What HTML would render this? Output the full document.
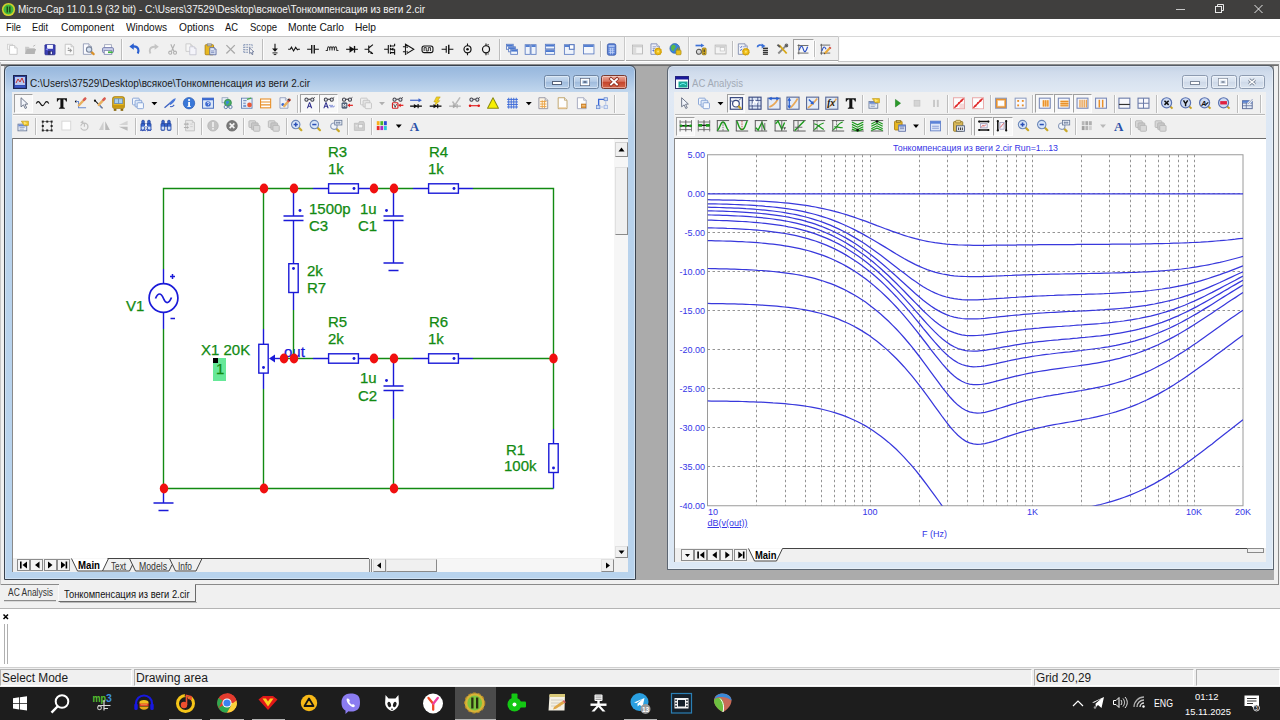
<!DOCTYPE html>
<html><head><meta charset="utf-8"><title>Micro-Cap</title><style>
html,body{margin:0;padding:0}
body{width:1280px;height:720px;overflow:hidden;position:relative;background:#f0f0f0;font-family:"Liberation Sans",sans-serif;font-size:12px;color:#000}
.a{position:absolute}
.t{position:absolute;white-space:nowrap;line-height:1}
svg{position:absolute;overflow:visible}
</style></head><body>
<div class="a " style="left:0px;top:0px;width:1280px;height:19px;background:#403f3e"></div>
<svg style="left:2px;top:2px" width="15" height="15" viewBox="0 0 15 15"><circle cx="6.500" cy="7.500" r="6.600" fill="#d2d22c"/><circle cx="6.500" cy="7.500" r="5" fill="#3eb63e"/><rect x="4.600" y="4.500" width="1.300" height="6" fill="#1c3a12"/><rect x="7.200" y="4.500" width="1.300" height="6" fill="#1c3a12"/></svg>
<div class="t" style="left:18px;top:4px;font-size:10.5px;color:#f4f4f4;transform:scaleX(0.9516);transform-origin:0 0;">Micro-Cap 11.0.1.9 (32 bit) - C:\Users\37529\Desktop\всякое\Тонкомпенсация из веги 2.cir</div>
<svg style="left:1170px;top:0" width="110" height="19" viewBox="0 0 110 19"><g stroke="#e8e8e8" stroke-width="1" fill="none"><path d="M6 9.5h9" stroke="#c8c8c8"/><rect x="45.5" y="6.5" width="6" height="6"/><path d="M47.5 6.5v-2h6v6h-2"/><path d="M84.5 5l8 8M92.500 5l-8 8"/></g></svg>
<div class="a " style="left:0px;top:19px;width:1280px;height:17px;background:#fff"></div>
<div class="t" style="left:6px;top:23px;font-size:10.3px;color:#111;transform:scaleX(0.9041);transform-origin:0 0;">File</div>
<div class="t" style="left:32px;top:23px;font-size:10.3px;color:#111;transform:scaleX(0.9018);transform-origin:0 0;">Edit</div>
<div class="t" style="left:61px;top:23px;font-size:10.3px;color:#111;transform:scaleX(0.9956);transform-origin:0 0;">Component</div>
<div class="t" style="left:126px;top:23px;font-size:10.3px;color:#111;transform:scaleX(0.9816);transform-origin:0 0;">Windows</div>
<div class="t" style="left:179px;top:23px;font-size:10.3px;color:#111;transform:scaleX(0.9863);transform-origin:0 0;">Options</div>
<div class="t" style="left:225px;top:23px;font-size:10.3px;color:#111;transform:scaleX(0.9088);transform-origin:0 0;">AC</div>
<div class="t" style="left:250px;top:23px;font-size:10.3px;color:#111;transform:scaleX(0.9248);transform-origin:0 0;">Scope</div>
<div class="t" style="left:288px;top:23px;font-size:10.3px;color:#111;transform:scaleX(0.9985);transform-origin:0 0;">Monte Carlo</div>
<div class="t" style="left:355px;top:23px;font-size:10.3px;color:#111;transform:scaleX(0.9917);transform-origin:0 0;">Help</div>
<div class="a " style="left:0px;top:36px;width:1280px;height:26px;background:#fff"></div>
<div class="a " style="left:0px;top:36px;width:838px;height:25px;background:#f0f0f0;border-top:1px solid #c4c4c4;border-bottom:1px solid #a8a8a8;box-sizing:border-box"></div>
<div class="a " style="left:838px;top:36px;width:442px;height:1px;background:#d8d8d8"></div>
<div class="a " style="left:838px;top:61px;width:442px;height:1px;background:#c8c8c8"></div>
<div class="a " style="left:624px;top:37px;width:1px;height:24px;background:#c9c9c9"></div>
<div class="a " style="left:625px;top:37px;width:1px;height:24px;background:#fbfbfb"></div>
<div class="a " style="left:688px;top:37px;width:1px;height:24px;background:#c9c9c9"></div>
<div class="a " style="left:689px;top:37px;width:1px;height:24px;background:#fbfbfb"></div>
<div class="a " style="left:838px;top:37px;width:1px;height:24px;background:#c9c9c9"></div>
<div class="a " style="left:839px;top:37px;width:1px;height:24px;background:#fbfbfb"></div>
<div class="a " style="left:0px;top:62px;width:1280px;height:523px;background:#f0f0f0"></div>
<div class="a " style="left:0px;top:64px;width:1279px;height:1px;background:#8c8c8c"></div>
<div class="a " style="left:0px;top:65px;width:1279px;height:1px;background:#6e6e6e"></div>
<div class="a " style="left:0px;top:584px;width:1279px;height:1px;background:#8a8a8a"></div>
<div class="a " style="left:1278px;top:65px;width:1px;height:520px;background:#8a8a8a"></div>
<div class="a " style="left:0px;top:62px;width:1px;height:523px;background:#c8c8c8"></div>
<div class="a " style="left:4px;top:66px;width:1270px;height:514px;background:#ababab"></div>
<div class="a " style="left:4px;top:65px;width:632px;height:515px;background:linear-gradient(#96b7dc 0px,#a3c0e2 9px,#b8d0ea 21px,#c4d9ef 28px,#b8d2ec 61px,#b8d3ed 100%);border:1px solid #38424e;border-radius:6px 6px 1px 1px;box-sizing:border-box;box-shadow:inset 0 0 0 1px rgba(255,255,255,.35)"></div>
<svg style="left:13px;top:75px" width="14" height="14" viewBox="0 0 14 14"><rect x="0.5" y="0.5" width="13" height="13" fill="#2a3f9a" stroke="#1c2450"/><rect x="2" y="2" width="10" height="8" fill="#b8c8f0"/><path d="M3 8l2-4 2 3 2-4 2 5" stroke="#c03030" fill="none"/><rect x="2" y="10.5" width="10" height="2" fill="#3858c8"/></svg>
<div class="t" style="left:30px;top:77.8px;font-size:10.5px;color:#1a1a1a;transform:scaleX(0.9516);transform-origin:0 0;">C:\Users\37529\Desktop\всякое\Тонкомпенсация из веги 2.cir</div>
<div class="a " style="left:544.0px;top:75px;width:26px;height:14px;background:linear-gradient(#c9dcf0 0%,#b4cbe6 45%,#9fbbdc 50%,#b8d0ea 100%);border:1px solid #6f86a3;border-radius:2.5px;box-sizing:border-box;box-shadow:inset 0 0 0 1px rgba(255,255,255,.4)"></div><div class="a " style="left:572.5px;top:75px;width:26px;height:14px;background:linear-gradient(#c9dcf0 0%,#b4cbe6 45%,#9fbbdc 50%,#b8d0ea 100%);border:1px solid #6f86a3;border-radius:2.5px;box-sizing:border-box;box-shadow:inset 0 0 0 1px rgba(255,255,255,.4)"></div><div class="a " style="left:601.0px;top:75px;width:26px;height:14px;background:linear-gradient(#e9a99a 0%,#d8705c 45%,#c4432b 50%,#d4654a 100%);border:1px solid #7a3a30;border-radius:2.5px;box-sizing:border-box;box-shadow:inset 0 0 0 1px rgba(255,255,255,.4)"></div><svg style="left:544px;top:75px" width="84" height="14" viewBox="0 0 84 14"><rect x="8.5" y="6.5" width="9" height="3" fill="#fff" stroke="#54617a" stroke-width="1"/><rect x="36.5" y="3.5" width="9" height="7" fill="none" stroke="#54617a" stroke-width="1"/><rect x="37.5" y="4.5" width="7" height="5" fill="none" stroke="#fff" stroke-width="1.6"/><rect x="39.5" y="6.2" width="3" height="1.6" fill="#54617a"/><path d="M67 4l6 5.500M73 4l-6 5.500" stroke="#8a2a1c" stroke-width="3.400" stroke-linecap="square"/><path d="M67 4l6 5.500M73 4l-6 5.500" stroke="#fff" stroke-width="1.900" stroke-linecap="square"/></svg>
<div class="a " style="left:12px;top:92px;width:616px;height:480px;background:#f0f0f0"></div>
<div class="a " style="left:13px;top:114px;width:612px;height:1px;background:#b9b9b9"></div>
<div class="a " style="left:13px;top:115px;width:612px;height:1px;background:#fafafa"></div>
<div class="a " style="left:12px;top:138px;width:616px;height:1px;background:#6e6e6e"></div>
<div class="a " style="left:12px;top:138px;width:1px;height:434px;background:#8a8a8a"></div>
<div class="a " style="left:13px;top:139px;width:601px;height:419px;background:#fff"></div>
<div class="a " style="left:614px;top:139px;width:14px;height:419px;background:#f6f6f6"></div>
<div class="a " style="left:615px;top:142px;width:13px;height:15px;background:#f0f0f0;border:1px solid #d2d2d2;border-right-color:#8a8a8a;border-bottom-color:#8a8a8a;box-sizing:border-box"></div>
<svg style="left:615px;top:142px" width="13" height="15"><path d="M3.5 9.5l3-4 3 4z" fill="#000"/></svg>
<div class="a " style="left:615px;top:167px;width:13px;height:68px;background:#f0f0f0;border:1px solid #e0e0e0;border-right-color:#8a8a8a;border-bottom-color:#8a8a8a;box-sizing:border-box"></div>
<div class="a " style="left:615px;top:546px;width:13px;height:12px;background:#f0f0f0;border:1px solid #e0e0e0;border-right-color:#8a8a8a;border-bottom-color:#8a8a8a;box-sizing:border-box"></div>
<svg style="left:615px;top:546px" width="13" height="12"><path d="M3.5 4.500l3 3.500 3-3.500z" fill="#000"/></svg>
<div class="a " style="left:13px;top:558px;width:601px;height:14px;background:#f0f0f0"></div>
<div class="a " style="left:614px;top:558px;width:14px;height:14px;background:#f0f0f0"></div>
<div class="a " style="left:17.0px;top:559px;width:13px;height:12px;background:#f4f4f4;border:1px solid #8c8c8c;box-sizing:border-box"></div><div class="a " style="left:30.4px;top:559px;width:13px;height:12px;background:#f4f4f4;border:1px solid #8c8c8c;box-sizing:border-box"></div><div class="a " style="left:43.8px;top:559px;width:13px;height:12px;background:#f4f4f4;border:1px solid #8c8c8c;box-sizing:border-box"></div><div class="a " style="left:57.2px;top:559px;width:13px;height:12px;background:#f4f4f4;border:1px solid #8c8c8c;box-sizing:border-box"></div>
<svg style="left:17px;top:559px" width="54" height="12" viewBox="0 0 54 12"><g fill="#000"><rect x="3" y="2.5" width="1.6" height="7"/><path d="M10 2.5v7l-4.5-3.5z"/><path d="M22.5 2.5v7l-4.5-3.5z"/><path d="M31 2.5v7l4.5-3.5z"/><path d="M44 2.5v7l4.5-3.5z"/><rect x="48.6" y="2.5" width="1.6" height="7"/></g></svg>
<svg style="left:0;top:0" width="640" height="580"><g fill="none" stroke="#444" stroke-width="1"><path d="M71.5 558.5l6 12.5h25l6-12.5" fill="#fff" stroke="none"/><path d="M71.5 558.5l6 12.5h25l6-12.5"/><path d="M107.5 558.5H369"/><path d="M102.5 571h27l3-6.200M129.500 558.500l6 12.500h33.500l3-6.200M169.500 558.500l6 12.500h20.500l6-12.500"/></g></svg>
<div class="t" style="left:78px;top:560px;font-size:11px;color:#000;font-weight:bold;transform:scaleX(0.8780);transform-origin:0 0;">Main</div>
<div class="t" style="left:111px;top:560.5px;font-size:10.5px;color:#333;transform:scaleX(0.7789);transform-origin:0 0;">Text</div>
<div class="t" style="left:138.5px;top:560.5px;font-size:10.5px;color:#333;transform:scaleX(0.8272);transform-origin:0 0;">Models</div>
<div class="t" style="left:178px;top:560.5px;font-size:10.5px;color:#333;transform:scaleX(0.7994);transform-origin:0 0;">Info</div>
<div class="a " style="left:369px;top:559px;width:1px;height:13px;background:#8a8a8a"></div>
<div class="a " style="left:371px;top:559px;width:1px;height:13px;background:#8a8a8a"></div>
<div class="a " style="left:372px;top:559px;width:242px;height:13px;background:#f6f6f6"></div>
<div class="a " style="left:373px;top:559px;width:13px;height:13px;background:#f0f0f0;border:1px solid #e0e0e0;border-right-color:#8a8a8a;border-bottom-color:#8a8a8a;box-sizing:border-box"></div>
<svg style="left:373px;top:559px" width="13" height="13"><path d="M8 3.5l-4 3 4 3z" fill="#000"/></svg>
<div class="a " style="left:386px;top:559px;width:51px;height:13px;background:#f0f0f0;border:1px solid #e0e0e0;border-right-color:#8a8a8a;border-bottom-color:#8a8a8a;box-sizing:border-box"></div>
<div class="a " style="left:601px;top:559px;width:13px;height:13px;background:#f0f0f0;border:1px solid #e0e0e0;border-right-color:#8a8a8a;border-bottom-color:#8a8a8a;box-sizing:border-box"></div>
<svg style="left:601px;top:559px" width="13" height="13"><path d="M5 3.5l4 3-4 3z" fill="#000"/></svg>
<div class="t" style="left:283.5px;top:344.9px;font-size:14px;color:#1a1ad8;-webkit-text-stroke:0.25px #1a1ad8;transform:scaleX(1.07);transform-origin:0 0">out</div>
<svg style="left:0;top:0" width="640" height="580"><g fill="none" stroke-width="1.4" stroke-linecap="butt"><path d="M163.5 269V188.5H313" stroke="#128a12"/><path d="M370 188.5H413" stroke="#128a12"/><path d="M473 188.5H553.5V429" stroke="#128a12"/><path d="M163.5 329V488.5" stroke="#128a12"/><path d="M163.5 488.5H553.5" stroke="#128a12"/><path d="M263.5 188.5V329" stroke="#128a12"/><path d="M263.5 389V488.5" stroke="#128a12"/><path d="M293.5 310V358.5" stroke="#128a12"/><path d="M283 358.5H313" stroke="#128a12"/><path d="M370 358.5H413" stroke="#128a12"/><path d="M473 358.5H553.5" stroke="#128a12"/><path d="M393.5 419V488.5" stroke="#128a12"/><path d="M163.5 269V283.5M163.5 312.5V329" stroke="#1a1ad8"/><path d="M313 188.5H328M359 188.5H370" stroke="#1a1ad8"/><path d="M413 188.5H428M459 188.5H473" stroke="#1a1ad8"/><path d="M313 358.5H328M359 358.5H370" stroke="#1a1ad8"/><path d="M413 358.5H428M459 358.5H473" stroke="#1a1ad8"/><path d="M293.5 188.5V216M293.5 220.5V263M293.5 293V310" stroke="#1a1ad8"/><path d="M283.5 216H303.5M283.5 220.5H303.5" stroke="#1a1ad8"/><path d="M393.5 188.5V216M393.5 220.5V263" stroke="#1a1ad8"/><path d="M383.5 216H403.5M383.5 220.5H403.5" stroke="#1a1ad8"/><path d="M383.5 263H403.5M388.5 270.5H398.5" stroke="#1a1ad8"/><path d="M393.5 358.5V386M393.5 390.5V419" stroke="#1a1ad8"/><path d="M383.5 386H403.5M383.5 390.5H403.5" stroke="#1a1ad8"/><path d="M263.5 329V344M263.5 373V389" stroke="#1a1ad8"/><path d="M274 358.5H283" stroke="#1a1ad8"/><path d="M553.5 429V443M553.5 473V488.5" stroke="#1a1ad8"/><path d="M163.5 488.5V503M153.5 503H173.5M158.5 510.5H168.5" stroke="#1a1ad8"/><rect x="328.6" y="183.8" width="29.8" height="9.4" stroke="#1a1ad8"/><rect x="428.6" y="183.8" width="29.8" height="9.4" stroke="#1a1ad8"/><rect x="328.6" y="353.8" width="29.8" height="9.4" stroke="#1a1ad8"/><rect x="428.6" y="353.8" width="29.8" height="9.4" stroke="#1a1ad8"/><rect x="288.8" y="263.7" width="9.4" height="28.8" stroke="#1a1ad8"/><rect x="258.8" y="344.3" width="9.4" height="28.8" stroke="#1a1ad8"/><rect x="548.8" y="443.7" width="9.4" height="28.8" stroke="#1a1ad8"/><circle cx="163.5" cy="298" r="14.4" stroke="#1a1ad8" stroke-width="1.7"/><path d="M155.500 298.500c2.500-6 5.500-6 8 0s5.500 5 8-1" stroke="#1a1ad8" stroke-width="1.700"/></g><circle cx="354" cy="188.5" r="1.45" fill="#1a1ad8"/><circle cx="454" cy="188.5" r="1.45" fill="#1a1ad8"/><circle cx="354" cy="358.5" r="1.45" fill="#1a1ad8"/><circle cx="454" cy="358.5" r="1.45" fill="#1a1ad8"/><circle cx="293.5" cy="268.5" r="1.45" fill="#1a1ad8"/><circle cx="263.5" cy="367.5" r="1.45" fill="#1a1ad8"/><circle cx="553.5" cy="468" r="1.45" fill="#1a1ad8"/><circle cx="300" cy="210.5" r="1.45" fill="#1a1ad8"/><circle cx="386.5" cy="210.5" r="1.45" fill="#1a1ad8"/><circle cx="386.5" cy="380.5" r="1.45" fill="#1a1ad8"/><path d="M269 358.5l6-4v8z" fill="#1a1ad8"/><path d="M170 276.5h5M172.5 274v5M170.5 318.5h4.5" stroke="#1a1ad8" stroke-width="1.500" fill="none"/><ellipse cx="264" cy="188.5" rx="4.2" ry="5" fill="#f01010"/><ellipse cx="294" cy="188.5" rx="4.2" ry="5" fill="#f01010"/><ellipse cx="374" cy="188.5" rx="4.2" ry="5" fill="#f01010"/><ellipse cx="394" cy="188.5" rx="4.2" ry="5" fill="#f01010"/><ellipse cx="284" cy="358.5" rx="4.2" ry="5" fill="#f01010"/><ellipse cx="294" cy="358.5" rx="4.2" ry="5" fill="#f01010"/><ellipse cx="374" cy="358.5" rx="4.2" ry="5" fill="#f01010"/><ellipse cx="394" cy="358.5" rx="4.2" ry="5" fill="#f01010"/><ellipse cx="553.5" cy="358.5" rx="4.2" ry="5" fill="#f01010"/><ellipse cx="164" cy="488.5" rx="4.2" ry="5" fill="#f01010"/><ellipse cx="264" cy="488.5" rx="4.2" ry="5" fill="#f01010"/><ellipse cx="394" cy="488.5" rx="4.2" ry="5" fill="#f01010"/></svg>
<div class="a " style="left:213px;top:358px;width:13px;height:23px;background:#66e898"></div>
<div class="a " style="left:213px;top:358px;width:5px;height:5px;background:#000"></div>
<div class="t" style="left:328px;top:144.7px;font-size:14px;color:#128a12;-webkit-text-stroke:0.25px #128a12;transform:scaleX(1.07);transform-origin:0 0">R3</div>
<div class="t" style="left:328px;top:162.2px;font-size:14px;color:#128a12;-webkit-text-stroke:0.25px #128a12;transform:scaleX(1.07);transform-origin:0 0">1k</div>
<div class="t" style="left:428.5px;top:144.7px;font-size:14px;color:#128a12;-webkit-text-stroke:0.25px #128a12;transform:scaleX(1.07);transform-origin:0 0">R4</div>
<div class="t" style="left:428px;top:162.2px;font-size:14px;color:#128a12;-webkit-text-stroke:0.25px #128a12;transform:scaleX(1.07);transform-origin:0 0">1k</div>
<div class="t" style="left:309px;top:202.2px;font-size:14px;color:#128a12;-webkit-text-stroke:0.25px #128a12;transform:scaleX(1.07);transform-origin:0 0">1500p</div>
<div class="t" style="left:308.5px;top:218.9px;font-size:14px;color:#128a12;-webkit-text-stroke:0.25px #128a12;transform:scaleX(1.07);transform-origin:0 0">C3</div>
<div class="t" style="left:360px;top:202.2px;font-size:14px;color:#128a12;-webkit-text-stroke:0.25px #128a12;transform:scaleX(1.07);transform-origin:0 0">1u</div>
<div class="t" style="left:358px;top:218.9px;font-size:14px;color:#128a12;-webkit-text-stroke:0.25px #128a12;transform:scaleX(1.07);transform-origin:0 0">C1</div>
<div class="t" style="left:307px;top:264.2px;font-size:14px;color:#128a12;-webkit-text-stroke:0.25px #128a12;transform:scaleX(1.07);transform-origin:0 0">2k</div>
<div class="t" style="left:307px;top:281.4px;font-size:14px;color:#128a12;-webkit-text-stroke:0.25px #128a12;transform:scaleX(1.07);transform-origin:0 0">R7</div>
<div class="t" style="left:328px;top:314.7px;font-size:14px;color:#128a12;-webkit-text-stroke:0.25px #128a12;transform:scaleX(1.07);transform-origin:0 0">R5</div>
<div class="t" style="left:328px;top:332.2px;font-size:14px;color:#128a12;-webkit-text-stroke:0.25px #128a12;transform:scaleX(1.07);transform-origin:0 0">2k</div>
<div class="t" style="left:428.5px;top:314.7px;font-size:14px;color:#128a12;-webkit-text-stroke:0.25px #128a12;transform:scaleX(1.07);transform-origin:0 0">R6</div>
<div class="t" style="left:428px;top:332.2px;font-size:14px;color:#128a12;-webkit-text-stroke:0.25px #128a12;transform:scaleX(1.07);transform-origin:0 0">1k</div>
<div class="t" style="left:360px;top:371.4px;font-size:14px;color:#128a12;-webkit-text-stroke:0.25px #128a12;transform:scaleX(1.07);transform-origin:0 0">1u</div>
<div class="t" style="left:358px;top:388.9px;font-size:14px;color:#128a12;-webkit-text-stroke:0.25px #128a12;transform:scaleX(1.07);transform-origin:0 0">C2</div>
<div class="t" style="left:506px;top:443.4px;font-size:14px;color:#128a12;-webkit-text-stroke:0.25px #128a12;transform:scaleX(1.07);transform-origin:0 0">R1</div>
<div class="t" style="left:503.5px;top:459.4px;font-size:14px;color:#128a12;-webkit-text-stroke:0.25px #128a12;transform:scaleX(1.07);transform-origin:0 0">100k</div>
<div class="t" style="left:125.5px;top:299.4px;font-size:14px;color:#128a12;-webkit-text-stroke:0.25px #128a12;transform:scaleX(1.07);transform-origin:0 0">V1</div>
<div class="t" style="left:200.5px;top:342.7px;font-size:14px;color:#128a12;-webkit-text-stroke:0.25px #128a12;transform:scaleX(1.07);transform-origin:0 0">X1 20K</div>
<div class="t" style="left:216px;top:362.4px;font-size:14px;color:#128a12;-webkit-text-stroke:0.25px #128a12;transform:scaleX(1.07);transform-origin:0 0">1</div>
<div class="a " style="left:667px;top:65px;width:607px;height:505px;background:linear-gradient(#c2d0e4 0px,#cfdbeb 6px,#d9e3f0 16px,#e1e9f4 28px,#dde8f5 61px,#dce8f5 100%);border:1px solid #5c6672;border-top-color:#555c66;border-radius:6px 6px 1px 1px;box-sizing:border-box;box-shadow:inset 0 0 0 1px rgba(255,255,255,.35)"></div>
<svg style="left:675px;top:76px" width="14" height="13" viewBox="0 0 14 13"><rect x="0.5" y="0.5" width="13" height="12" fill="#fff" stroke="#30306a"/><rect x="0.5" y="0.5" width="13" height="3" fill="#1a1a9a"/><rect x="3.5" y="5.5" width="9" height="6" fill="#18a898"/><path d="M5 9c2-2 4-2 6 0" stroke="#7ff" fill="none"/></svg>
<div class="t" style="left:692px;top:78.3px;font-size:10.5px;color:#a2aab6;transform:scaleX(0.9104);transform-origin:0 0;">AC Analysis</div>
<div class="a " style="left:1182.0px;top:75px;width:26px;height:14px;background:linear-gradient(#e4ecf6 0%,#d8e2ef 45%,#cdd8e8 50%,#dbe5f1 100%);border:1px solid #8d9bb0;border-radius:2.5px;box-sizing:border-box;box-shadow:inset 0 0 0 1px rgba(255,255,255,.4)"></div><div class="a " style="left:1210.5px;top:75px;width:26px;height:14px;background:linear-gradient(#e4ecf6 0%,#d8e2ef 45%,#cdd8e8 50%,#dbe5f1 100%);border:1px solid #8d9bb0;border-radius:2.5px;box-sizing:border-box;box-shadow:inset 0 0 0 1px rgba(255,255,255,.4)"></div><div class="a " style="left:1239.0px;top:75px;width:26px;height:14px;background:linear-gradient(#e4ecf6 0%,#d8e2ef 45%,#cdd8e8 50%,#dbe5f1 100%);border:1px solid #8d9bb0;border-radius:2.5px;box-sizing:border-box;box-shadow:inset 0 0 0 1px rgba(255,255,255,.4)"></div><svg style="left:1182px;top:75px" width="84" height="14" viewBox="0 0 84 14"><rect x="8.5" y="6.5" width="9" height="3" fill="#fff" stroke="#7c8798" stroke-width="1"/><rect x="36.5" y="3.5" width="9" height="7" fill="none" stroke="#7c8798" stroke-width="1"/><rect x="37.5" y="4.5" width="7" height="5" fill="none" stroke="#fff" stroke-width="1.6"/><rect x="39.5" y="6.2" width="3" height="1.6" fill="#7c8798"/><path d="M67 4.500l6 5M73 4.500l-6 5" stroke="#7c8798" stroke-width="3" /><path d="M67 4.500l6 5M73 4.500l-6 5" stroke="#fff" stroke-width="1.400"/></svg>
<div class="a " style="left:674px;top:92px;width:592px;height:470px;background:#f0f0f0"></div>
<div class="a " style="left:675px;top:114px;width:590px;height:1px;background:#b9b9b9"></div>
<div class="a " style="left:675px;top:115px;width:590px;height:1px;background:#fafafa"></div>
<div class="a " style="left:674px;top:138px;width:592px;height:1px;background:#6e6e6e"></div>
<div class="a " style="left:674px;top:138px;width:1px;height:424px;background:#8a8a8a"></div>
<div class="a " style="left:675px;top:139px;width:591px;height:409px;background:#fff"></div>
<div class="a " style="left:675px;top:548px;width:591px;height:14px;background:#f0f0f0"></div>
<div class="a " style="left:680.5px;top:549px;width:13px;height:12px;background:#f4f4f4;border:1px solid #8c8c8c;box-sizing:border-box"></div><div class="a " style="left:693.8px;top:549px;width:13px;height:12px;background:#f4f4f4;border:1px solid #8c8c8c;box-sizing:border-box"></div><div class="a " style="left:707.1px;top:549px;width:13px;height:12px;background:#f4f4f4;border:1px solid #8c8c8c;box-sizing:border-box"></div><div class="a " style="left:720.4px;top:549px;width:13px;height:12px;background:#f4f4f4;border:1px solid #8c8c8c;box-sizing:border-box"></div><div class="a " style="left:733.7px;top:549px;width:13px;height:12px;background:#f4f4f4;border:1px solid #8c8c8c;box-sizing:border-box"></div>
<svg style="left:680.5px;top:549px" width="68" height="12" viewBox="0 0 68 12"><g fill="#000"><path d="M4 5h5l-2.5 3z"/><rect x="16.3" y="2.5" width="1.6" height="7"/><path d="M23.3 2.5v7l-4.5-3.5z"/><path d="M35.8 2.500v7l-4.5-3.5z"/><path d="M44.300 2.5v7l4.5-3.5z"/><path d="M57.300 2.5v7l4.5-3.5z"/><rect x="61.900" y="2.5" width="1.6" height="7"/></g></svg>
<svg style="left:0;top:0" width="1280" height="580"><g fill="none" stroke="#444" stroke-width="1"><path d="M748.500 548.5l6 12.500h22l6-12.500" fill="#fff" stroke="none"/><path d="M748.500 548.5l6 12.500h22l6-12.500"/><path d="M782.500 548.5H1247"/></g><rect x="1247.500" y="548.500" width="16" height="4" fill="#f0f0f0" stroke="#8a8a8a"/></svg>
<div class="t" style="left:755px;top:550px;font-size:11px;color:#000;font-weight:bold;transform:scaleX(0.8581);transform-origin:0 0;">Main</div>
<svg style="left:0;top:0" width="1280" height="580"><defs><clipPath id="pc"><rect x="707.5" y="154.75" width="535.5" height="351.0"/></clipPath></defs><path d="M756.5 154.75V505.75M785.5 154.75V505.75M805.5 154.75V505.75M821.5 154.75V505.75M834.5 154.75V505.75M845.5 154.75V505.75M854.5 154.75V505.75M862.5 154.75V505.75M870.5 154.75V505.75M919.5 154.75V505.75M947.5 154.75V505.75M967.5 154.75V505.75M983.5 154.75V505.75M996.5 154.75V505.75M1007.5 154.75V505.75M1016.5 154.75V505.75M1025.5 154.75V505.75M1032.5 154.75V505.75M1081.5 154.75V505.75M1109.5 154.75V505.75M1130.5 154.75V505.75M1145.5 154.75V505.75M1158.5 154.75V505.75M1169.5 154.75V505.75M1178.5 154.75V505.75M1187.5 154.75V505.75M1194.5 154.75V505.75M707.5 193.5H1243.0M707.5 232.5H1243.0M707.5 271.5H1243.0M707.5 310.5H1243.0M707.5 349.5H1243.0M707.5 388.5H1243.0M707.5 427.5H1243.0M707.5 466.5H1243.0" stroke="#949494" stroke-width="1" stroke-dasharray="2.5 2.5" fill="none"/><rect x="707.5" y="154.75" width="535.5" height="351.0" fill="none" stroke="#9a9a9a" stroke-width="1"/><g clip-path="url(#pc)" fill="none" stroke="#3838dc" stroke-width="1.25"><polyline points="707.5,193.8 711.4,193.8 715.2,193.8 719.1,193.8 722.9,193.8 726.8,193.8 730.6,193.8 734.5,193.8 738.3,193.8 742.2,193.8 746.0,193.8 749.9,193.8 753.7,193.8 757.6,193.8 761.4,193.8 765.3,193.8 769.1,193.8 773.0,193.8 776.8,193.8 780.7,193.8 784.6,193.8 788.4,193.8 792.3,193.8 796.1,193.8 800.0,193.8 803.8,193.8 807.7,193.8 811.5,193.8 815.4,193.8 819.2,193.8 823.1,193.8 826.9,193.8 830.8,193.8 834.6,193.8 838.5,193.8 842.3,193.8 846.2,193.8 850.0,193.8 853.9,193.8 857.7,193.8 861.6,193.8 865.5,193.8 869.3,193.8 873.2,193.8 877.0,193.8 880.9,193.8 884.7,193.8 888.6,193.8 892.4,193.8 896.3,193.8 900.1,193.8 904.0,193.8 907.8,193.8 911.7,193.8 915.5,193.8 919.4,193.8 923.2,193.8 927.1,193.8 930.9,193.8 934.8,193.8 938.7,193.8 942.5,193.8 946.4,193.8 950.2,193.8 954.1,193.8 957.9,193.8 961.8,193.8 965.6,193.8 969.5,193.8 973.3,193.8 977.2,193.8 981.0,193.8 984.9,193.8 988.7,193.8 992.6,193.8 996.4,193.8 1000.3,193.8 1004.1,193.8 1008.0,193.8 1011.8,193.8 1015.7,193.8 1019.6,193.8 1023.4,193.8 1027.3,193.8 1031.1,193.8 1035.0,193.8 1038.8,193.8 1042.7,193.8 1046.5,193.8 1050.4,193.8 1054.2,193.8 1058.1,193.8 1061.9,193.8 1065.8,193.8 1069.6,193.8 1073.5,193.8 1077.3,193.8 1081.2,193.8 1085.0,193.8 1088.9,193.8 1092.8,193.8 1096.6,193.8 1100.5,193.8 1104.3,193.8 1108.2,193.8 1112.0,193.8 1115.9,193.8 1119.7,193.8 1123.6,193.8 1127.4,193.8 1131.3,193.8 1135.1,193.8 1139.0,193.8 1142.8,193.8 1146.7,193.8 1150.5,193.8 1154.4,193.8 1158.2,193.8 1162.1,193.8 1165.9,193.8 1169.8,193.8 1173.7,193.8 1177.5,193.8 1181.4,193.8 1185.2,193.8 1189.1,193.8 1192.9,193.8 1196.8,193.8 1200.6,193.8 1204.5,193.8 1208.3,193.8 1212.2,193.8 1216.0,193.8 1219.9,193.8 1223.7,193.8 1227.6,193.8 1231.4,193.8 1235.3,193.8 1239.1,193.8 1243.0,193.8"/><polyline points="707.5,199.7 711.4,199.8 715.2,199.8 719.1,199.9 722.9,200.0 726.8,200.0 730.6,200.1 734.5,200.2 738.3,200.3 742.2,200.4 746.0,200.5 749.9,200.7 753.7,200.8 757.6,201.0 761.4,201.2 765.3,201.4 769.1,201.6 773.0,201.9 776.8,202.2 780.7,202.5 784.6,202.8 788.4,203.2 792.3,203.6 796.1,204.1 800.0,204.6 803.8,205.1 807.7,205.7 811.5,206.4 815.4,207.0 819.2,207.8 823.1,208.6 826.9,209.5 830.8,210.4 834.6,211.4 838.5,212.4 842.3,213.5 846.2,214.7 850.0,215.9 853.9,217.2 857.7,218.5 861.6,219.8 865.5,221.2 869.3,222.7 873.2,224.1 877.0,225.6 880.9,227.0 884.7,228.5 888.6,229.9 892.4,231.3 896.3,232.7 900.1,234.0 904.0,235.3 907.8,236.5 911.7,237.6 915.5,238.7 919.4,239.7 923.2,240.5 927.1,241.3 930.9,242.0 934.8,242.7 938.7,243.2 942.5,243.7 946.4,244.1 950.2,244.4 954.1,244.6 957.9,244.9 961.8,245.0 965.6,245.1 969.5,245.2 973.3,245.3 977.2,245.3 981.0,245.3 984.9,245.3 988.7,245.3 992.6,245.2 996.4,245.2 1000.3,245.2 1004.1,245.1 1008.0,245.1 1011.8,245.0 1015.7,245.0 1019.6,244.9 1023.4,244.9 1027.3,244.8 1031.1,244.8 1035.0,244.8 1038.8,244.7 1042.7,244.7 1046.5,244.7 1050.4,244.6 1054.2,244.6 1058.1,244.6 1061.9,244.5 1065.8,244.5 1069.6,244.5 1073.5,244.5 1077.3,244.4 1081.2,244.4 1085.0,244.4 1088.9,244.4 1092.8,244.4 1096.6,244.3 1100.5,244.3 1104.3,244.3 1108.2,244.3 1112.0,244.2 1115.9,244.2 1119.7,244.2 1123.6,244.1 1127.4,244.1 1131.3,244.1 1135.1,244.0 1139.0,244.0 1142.8,243.9 1146.7,243.9 1150.5,243.8 1154.4,243.7 1158.2,243.6 1162.1,243.6 1165.9,243.5 1169.8,243.4 1173.7,243.2 1177.5,243.1 1181.4,243.0 1185.2,242.8 1189.1,242.7 1192.9,242.5 1196.8,242.3 1200.6,242.1 1204.5,241.8 1208.3,241.6 1212.2,241.3 1216.0,241.0 1219.9,240.7 1223.7,240.3 1227.6,240.0 1231.4,239.6 1235.3,239.2 1239.1,238.7 1243.0,238.3"/><polyline points="707.5,203.8 711.4,203.8 715.2,203.9 719.1,204.0 722.9,204.1 726.8,204.2 730.6,204.3 734.5,204.5 738.3,204.6 742.2,204.8 746.0,205.0 749.9,205.2 753.7,205.4 757.6,205.7 761.4,205.9 765.3,206.3 769.1,206.6 773.0,207.0 776.8,207.4 780.7,207.9 784.6,208.4 788.4,208.9 792.3,209.5 796.1,210.2 800.0,210.9 803.8,211.7 807.7,212.6 811.5,213.5 815.4,214.5 819.2,215.6 823.1,216.8 826.9,218.0 830.8,219.4 834.6,220.8 838.5,222.4 842.3,224.0 846.2,225.7 850.0,227.5 853.9,229.4 857.7,231.4 861.6,233.4 865.5,235.6 869.3,237.7 873.2,240.0 877.0,242.3 880.9,244.6 884.7,246.9 888.6,249.3 892.4,251.6 896.3,254.0 900.1,256.2 904.0,258.5 907.8,260.6 911.7,262.6 915.5,264.6 919.4,266.4 923.2,268.0 927.1,269.6 930.9,270.9 934.8,272.1 938.7,273.1 942.5,274.0 946.4,274.7 950.2,275.3 954.1,275.8 957.9,276.1 961.8,276.3 965.6,276.5 969.5,276.6 973.3,276.6 977.2,276.5 981.0,276.5 984.9,276.4 988.7,276.3 992.6,276.1 996.4,276.0 1000.3,275.8 1004.1,275.7 1008.0,275.5 1011.8,275.4 1015.7,275.2 1019.6,275.1 1023.4,274.9 1027.3,274.8 1031.1,274.7 1035.0,274.6 1038.8,274.5 1042.7,274.4 1046.5,274.3 1050.4,274.2 1054.2,274.1 1058.1,274.1 1061.9,274.0 1065.8,273.9 1069.6,273.8 1073.5,273.8 1077.3,273.7 1081.2,273.6 1085.0,273.6 1088.9,273.5 1092.8,273.4 1096.6,273.4 1100.5,273.3 1104.3,273.2 1108.2,273.1 1112.0,273.0 1115.9,272.9 1119.7,272.8 1123.6,272.7 1127.4,272.6 1131.3,272.5 1135.1,272.3 1139.0,272.2 1142.8,272.0 1146.7,271.8 1150.5,271.6 1154.4,271.3 1158.2,271.1 1162.1,270.8 1165.9,270.5 1169.8,270.2 1173.7,269.8 1177.5,269.4 1181.4,269.0 1185.2,268.5 1189.1,268.0 1192.9,267.4 1196.8,266.8 1200.6,266.2 1204.5,265.5 1208.3,264.8 1212.2,264.0 1216.0,263.2 1219.9,262.4 1223.7,261.5 1227.6,260.5 1231.4,259.5 1235.3,258.5 1239.1,257.5 1243.0,256.4"/><polyline points="707.5,207.2 711.4,207.3 715.2,207.4 719.1,207.5 722.9,207.6 726.8,207.8 730.6,207.9 734.5,208.1 738.3,208.2 742.2,208.4 746.0,208.7 749.9,208.9 753.7,209.2 757.6,209.5 761.4,209.8 765.3,210.2 769.1,210.6 773.0,211.0 776.8,211.5 780.7,212.0 784.6,212.6 788.4,213.3 792.3,214.0 796.1,214.7 800.0,215.6 803.8,216.5 807.7,217.5 811.5,218.6 815.4,219.8 819.2,221.0 823.1,222.4 826.9,223.9 830.8,225.4 834.6,227.1 838.5,228.9 842.3,230.8 846.2,232.8 850.0,234.9 853.9,237.1 857.7,239.4 861.6,241.8 865.5,244.3 869.3,247.0 873.2,249.7 877.0,252.5 880.9,255.3 884.7,258.2 888.6,261.2 892.4,264.2 896.3,267.2 900.1,270.2 904.0,273.1 907.8,276.1 911.7,278.9 915.5,281.6 919.4,284.2 923.2,286.7 927.1,289.0 930.9,291.0 934.8,292.9 938.7,294.5 942.5,295.9 946.4,297.0 950.2,297.9 954.1,298.7 957.9,299.2 961.8,299.6 965.6,299.8 969.5,299.9 973.3,299.9 977.2,299.8 981.0,299.6 984.9,299.4 988.7,299.2 992.6,298.9 996.4,298.6 1000.3,298.3 1004.1,298.1 1008.0,297.8 1011.8,297.5 1015.7,297.3 1019.6,297.0 1023.4,296.8 1027.3,296.6 1031.1,296.4 1035.0,296.2 1038.8,296.0 1042.7,295.8 1046.5,295.7 1050.4,295.5 1054.2,295.4 1058.1,295.2 1061.9,295.1 1065.8,295.0 1069.6,294.8 1073.5,294.7 1077.3,294.6 1081.2,294.5 1085.0,294.4 1088.9,294.2 1092.8,294.1 1096.6,294.0 1100.5,293.8 1104.3,293.7 1108.2,293.5 1112.0,293.3 1115.9,293.1 1119.7,292.9 1123.6,292.7 1127.4,292.5 1131.3,292.2 1135.1,291.9 1139.0,291.6 1142.8,291.3 1146.7,290.9 1150.5,290.5 1154.4,290.0 1158.2,289.5 1162.1,289.0 1165.9,288.4 1169.8,287.8 1173.7,287.1 1177.5,286.4 1181.4,285.6 1185.2,284.8 1189.1,283.9 1192.9,282.9 1196.8,281.9 1200.6,280.8 1204.5,279.7 1208.3,278.5 1212.2,277.2 1216.0,275.9 1219.9,274.6 1223.7,273.2 1227.6,271.8 1231.4,270.3 1235.3,268.8 1239.1,267.3 1243.0,265.8"/><polyline points="707.5,210.8 711.4,210.9 715.2,211.0 719.1,211.1 722.9,211.2 726.8,211.3 730.6,211.5 734.5,211.7 738.3,211.9 742.2,212.1 746.0,212.3 749.9,212.6 753.7,212.9 757.6,213.2 761.4,213.5 765.3,213.9 769.1,214.3 773.0,214.8 776.8,215.3 780.7,215.9 784.6,216.5 788.4,217.2 792.3,218.0 796.1,218.8 800.0,219.7 803.8,220.7 807.7,221.8 811.5,222.9 815.4,224.2 819.2,225.6 823.1,227.0 826.9,228.6 830.8,230.3 834.6,232.0 838.5,234.0 842.3,236.0 846.2,238.1 850.0,240.4 853.9,242.8 857.7,245.3 861.6,247.9 865.5,250.7 869.3,253.5 873.2,256.5 877.0,259.6 880.9,262.8 884.7,266.0 888.6,269.4 892.4,272.8 896.3,276.2 900.1,279.8 904.0,283.3 907.8,286.8 911.7,290.3 915.5,293.7 919.4,297.0 923.2,300.2 927.1,303.2 930.9,306.0 934.8,308.6 938.7,310.9 942.5,312.9 946.4,314.6 950.2,316.0 954.1,317.1 957.9,317.9 961.8,318.5 965.6,318.8 969.5,318.9 973.3,318.9 977.2,318.8 981.0,318.6 984.9,318.3 988.7,317.9 992.6,317.5 996.4,317.1 1000.3,316.7 1004.1,316.3 1008.0,315.9 1011.8,315.5 1015.7,315.1 1019.6,314.8 1023.4,314.4 1027.3,314.1 1031.1,313.8 1035.0,313.5 1038.8,313.2 1042.7,313.0 1046.5,312.7 1050.4,312.5 1054.2,312.3 1058.1,312.1 1061.9,311.9 1065.8,311.7 1069.6,311.5 1073.5,311.3 1077.3,311.2 1081.2,311.0 1085.0,310.8 1088.9,310.6 1092.8,310.4 1096.6,310.2 1100.5,309.9 1104.3,309.7 1108.2,309.4 1112.0,309.1 1115.9,308.8 1119.7,308.5 1123.6,308.2 1127.4,307.8 1131.3,307.4 1135.1,306.9 1139.0,306.4 1142.8,305.9 1146.7,305.3 1150.5,304.6 1154.4,304.0 1158.2,303.2 1162.1,302.4 1165.9,301.5 1169.8,300.6 1173.7,299.6 1177.5,298.5 1181.4,297.4 1185.2,296.2 1189.1,294.9 1192.9,293.6 1196.8,292.2 1200.6,290.7 1204.5,289.2 1208.3,287.6 1212.2,285.9 1216.0,284.2 1219.9,282.5 1223.7,280.7 1227.6,278.9 1231.4,277.1 1235.3,275.3 1239.1,273.5 1243.0,271.7"/><polyline points="707.5,214.9 711.4,215.0 715.2,215.1 719.1,215.2 722.9,215.3 726.8,215.4 730.6,215.6 734.5,215.8 738.3,216.0 742.2,216.2 746.0,216.4 749.9,216.7 753.7,217.0 757.6,217.3 761.4,217.7 765.3,218.1 769.1,218.5 773.0,219.0 776.8,219.6 780.7,220.2 784.6,220.8 788.4,221.5 792.3,222.3 796.1,223.1 800.0,224.1 803.8,225.1 807.7,226.2 811.5,227.4 815.4,228.7 819.2,230.0 823.1,231.5 826.9,233.2 830.8,234.9 834.6,236.7 838.5,238.7 842.3,240.8 846.2,243.0 850.0,245.4 853.9,247.8 857.7,250.4 861.6,253.2 865.5,256.0 869.3,259.0 873.2,262.1 877.0,265.4 880.9,268.7 884.7,272.2 888.6,275.8 892.4,279.5 896.3,283.3 900.1,287.1 904.0,291.0 907.8,295.0 911.7,299.0 915.5,302.9 919.4,306.8 923.2,310.7 927.1,314.4 930.9,317.9 934.8,321.2 938.7,324.2 942.5,326.9 946.4,329.2 950.2,331.2 954.1,332.7 957.9,333.9 961.8,334.8 965.6,335.3 969.5,335.6 973.3,335.6 977.2,335.5 981.0,335.2 984.9,334.8 988.7,334.3 992.6,333.8 996.4,333.3 1000.3,332.7 1004.1,332.2 1008.0,331.6 1011.8,331.1 1015.7,330.6 1019.6,330.1 1023.4,329.7 1027.3,329.2 1031.1,328.8 1035.0,328.4 1038.8,328.1 1042.7,327.7 1046.5,327.4 1050.4,327.1 1054.2,326.8 1058.1,326.5 1061.9,326.3 1065.8,326.0 1069.6,325.8 1073.5,325.5 1077.3,325.2 1081.2,325.0 1085.0,324.7 1088.9,324.4 1092.8,324.1 1096.6,323.8 1100.5,323.5 1104.3,323.1 1108.2,322.8 1112.0,322.4 1115.9,321.9 1119.7,321.5 1123.6,321.0 1127.4,320.4 1131.3,319.8 1135.1,319.2 1139.0,318.5 1142.8,317.7 1146.7,316.9 1150.5,316.1 1154.4,315.1 1158.2,314.1 1162.1,313.0 1165.9,311.9 1169.8,310.6 1173.7,309.3 1177.5,307.9 1181.4,306.5 1185.2,305.0 1189.1,303.3 1192.9,301.7 1196.8,299.9 1200.6,298.1 1204.5,296.3 1208.3,294.3 1212.2,292.4 1216.0,290.4 1219.9,288.4 1223.7,286.3 1227.6,284.3 1231.4,282.2 1235.3,280.2 1239.1,278.1 1243.0,276.1"/><polyline points="707.5,220.2 711.4,220.2 715.2,220.3 719.1,220.5 722.9,220.6 726.8,220.7 730.6,220.9 734.5,221.1 738.3,221.3 742.2,221.5 746.0,221.7 749.9,222.0 753.7,222.3 757.6,222.6 761.4,223.0 765.3,223.4 769.1,223.8 773.0,224.3 776.8,224.8 780.7,225.4 784.6,226.0 788.4,226.8 792.3,227.5 796.1,228.4 800.0,229.3 803.8,230.3 807.7,231.4 811.5,232.6 815.4,233.9 819.2,235.3 823.1,236.8 826.9,238.4 830.8,240.1 834.6,242.0 838.5,243.9 842.3,246.0 846.2,248.3 850.0,250.7 853.9,253.2 857.7,255.8 861.6,258.6 865.5,261.5 869.3,264.5 873.2,267.7 877.0,271.0 880.9,274.5 884.7,278.1 888.6,281.8 892.4,285.7 896.3,289.6 900.1,293.7 904.0,297.9 907.8,302.1 911.7,306.4 915.5,310.8 919.4,315.2 923.2,319.5 927.1,323.8 930.9,327.9 934.8,331.9 938.7,335.6 942.5,339.0 946.4,342.0 950.2,344.6 954.1,346.8 957.9,348.5 961.8,349.7 965.6,350.6 969.5,351.0 973.3,351.2 977.2,351.1 981.0,350.7 984.9,350.3 988.7,349.7 992.6,349.0 996.4,348.4 1000.3,347.7 1004.1,346.9 1008.0,346.3 1011.8,345.6 1015.7,344.9 1019.6,344.3 1023.4,343.7 1027.3,343.2 1031.1,342.7 1035.0,342.2 1038.8,341.7 1042.7,341.3 1046.5,340.9 1050.4,340.5 1054.2,340.1 1058.1,339.8 1061.9,339.4 1065.8,339.1 1069.6,338.8 1073.5,338.4 1077.3,338.1 1081.2,337.7 1085.0,337.4 1088.9,337.0 1092.8,336.6 1096.6,336.2 1100.5,335.8 1104.3,335.3 1108.2,334.8 1112.0,334.3 1115.9,333.7 1119.7,333.1 1123.6,332.4 1127.4,331.7 1131.3,330.9 1135.1,330.1 1139.0,329.2 1142.8,328.2 1146.7,327.2 1150.5,326.1 1154.4,324.9 1158.2,323.6 1162.1,322.3 1165.9,320.8 1169.8,319.3 1173.7,317.7 1177.5,316.1 1181.4,314.3 1185.2,312.5 1189.1,310.6 1192.9,308.6 1196.8,306.6 1200.6,304.5 1204.5,302.4 1208.3,300.2 1212.2,298.0 1216.0,295.8 1219.9,293.6 1223.7,291.3 1227.6,289.1 1231.4,286.8 1235.3,284.6 1239.1,282.4 1243.0,280.2"/><polyline points="707.5,227.8 711.4,227.9 715.2,228.0 719.1,228.1 722.9,228.2 726.8,228.4 730.6,228.5 734.5,228.7 738.3,228.9 742.2,229.1 746.0,229.3 749.9,229.5 753.7,229.8 757.6,230.1 761.4,230.5 765.3,230.9 769.1,231.3 773.0,231.8 776.8,232.3 780.7,232.8 784.6,233.5 788.4,234.1 792.3,234.9 796.1,235.7 800.0,236.6 803.8,237.6 807.7,238.6 811.5,239.8 815.4,241.0 819.2,242.4 823.1,243.9 826.9,245.4 830.8,247.1 834.6,248.9 838.5,250.9 842.3,252.9 846.2,255.1 850.0,257.5 853.9,260.0 857.7,262.6 861.6,265.3 865.5,268.2 869.3,271.3 873.2,274.5 877.0,277.8 880.9,281.3 884.7,284.9 888.6,288.7 892.4,292.6 896.3,296.7 900.1,300.9 904.0,305.2 907.8,309.7 911.7,314.2 915.5,318.8 919.4,323.5 923.2,328.3 927.1,333.0 930.9,337.6 934.8,342.2 938.7,346.5 942.5,350.6 946.4,354.3 950.2,357.6 954.1,360.4 957.9,362.7 961.8,364.5 965.6,365.7 969.5,366.4 973.3,366.8 977.2,366.7 981.0,366.4 984.9,365.9 988.7,365.2 992.6,364.4 996.4,363.6 1000.3,362.7 1004.1,361.9 1008.0,361.0 1011.8,360.2 1015.7,359.4 1019.6,358.6 1023.4,357.9 1027.3,357.3 1031.1,356.6 1035.0,356.0 1038.8,355.5 1042.7,354.9 1046.5,354.4 1050.4,354.0 1054.2,353.5 1058.1,353.0 1061.9,352.6 1065.8,352.2 1069.6,351.8 1073.5,351.3 1077.3,350.9 1081.2,350.5 1085.0,350.0 1088.9,349.5 1092.8,349.0 1096.6,348.5 1100.5,348.0 1104.3,347.4 1108.2,346.8 1112.0,346.1 1115.9,345.4 1119.7,344.6 1123.6,343.7 1127.4,342.9 1131.3,341.9 1135.1,340.9 1139.0,339.7 1142.8,338.6 1146.7,337.3 1150.5,336.0 1154.4,334.5 1158.2,333.0 1162.1,331.4 1165.9,329.7 1169.8,328.0 1173.7,326.1 1177.5,324.2 1181.4,322.2 1185.2,320.1 1189.1,318.0 1192.9,315.8 1196.8,313.6 1200.6,311.3 1204.5,308.9 1208.3,306.6 1212.2,304.2 1216.0,301.8 1219.9,299.3 1223.7,296.9 1227.6,294.5 1231.4,292.1 1235.3,289.7 1239.1,287.4 1243.0,285.1"/><polyline points="707.5,240.6 711.4,240.7 715.2,240.8 719.1,240.9 722.9,241.0 726.8,241.1 730.6,241.2 734.5,241.4 738.3,241.6 742.2,241.7 746.0,242.0 749.9,242.2 753.7,242.4 757.6,242.7 761.4,243.0 765.3,243.4 769.1,243.8 773.0,244.2 776.8,244.7 780.7,245.2 784.6,245.8 788.4,246.4 792.3,247.1 796.1,247.8 800.0,248.7 803.8,249.6 807.7,250.5 811.5,251.6 815.4,252.8 819.2,254.1 823.1,255.4 826.9,256.9 830.8,258.5 834.6,260.2 838.5,262.1 842.3,264.0 846.2,266.1 850.0,268.4 853.9,270.8 857.7,273.3 861.6,276.0 865.5,278.8 869.3,281.8 873.2,284.9 877.0,288.2 880.9,291.6 884.7,295.2 888.6,299.0 892.4,302.9 896.3,307.0 900.1,311.2 904.0,315.6 907.8,320.1 911.7,324.8 915.5,329.6 919.4,334.5 923.2,339.5 927.1,344.5 930.9,349.6 934.8,354.6 938.7,359.4 942.5,364.1 946.4,368.5 950.2,372.5 954.1,376.0 957.9,378.9 961.8,381.2 965.6,383.0 969.5,384.1 973.3,384.6 977.2,384.7 981.0,384.5 984.9,383.9 988.7,383.1 992.6,382.2 996.4,381.2 1000.3,380.2 1004.1,379.2 1008.0,378.2 1011.8,377.2 1015.7,376.2 1019.6,375.3 1023.4,374.5 1027.3,373.7 1031.1,372.9 1035.0,372.2 1038.8,371.5 1042.7,370.9 1046.5,370.3 1050.4,369.7 1054.2,369.1 1058.1,368.6 1061.9,368.1 1065.8,367.5 1069.6,367.0 1073.5,366.5 1077.3,366.0 1081.2,365.4 1085.0,364.9 1088.9,364.3 1092.8,363.7 1096.6,363.1 1100.5,362.4 1104.3,361.7 1108.2,360.9 1112.0,360.1 1115.9,359.2 1119.7,358.3 1123.6,357.2 1127.4,356.2 1131.3,355.0 1135.1,353.8 1139.0,352.5 1142.8,351.1 1146.7,349.6 1150.5,348.0 1154.4,346.4 1158.2,344.7 1162.1,342.8 1165.9,340.9 1169.8,338.9 1173.7,336.9 1177.5,334.7 1181.4,332.5 1185.2,330.2 1189.1,327.9 1192.9,325.5 1196.8,323.0 1200.6,320.5 1204.5,318.0 1208.3,315.5 1212.2,312.9 1216.0,310.3 1219.9,307.7 1223.7,305.2 1227.6,302.6 1231.4,300.1 1235.3,297.6 1239.1,295.1 1243.0,292.6"/><polyline points="707.5,268.5 711.4,268.6 715.2,268.7 719.1,268.8 722.9,268.8 726.8,268.9 730.6,269.1 734.5,269.2 738.3,269.3 742.2,269.5 746.0,269.6 749.9,269.8 753.7,270.0 757.6,270.3 761.4,270.5 765.3,270.8 769.1,271.1 773.0,271.5 776.8,271.9 780.7,272.3 784.6,272.8 788.4,273.3 792.3,273.9 796.1,274.5 800.0,275.2 803.8,276.0 807.7,276.8 811.5,277.7 815.4,278.7 819.2,279.8 823.1,281.0 826.9,282.3 830.8,283.7 834.6,285.2 838.5,286.9 842.3,288.6 846.2,290.5 850.0,292.6 853.9,294.7 857.7,297.0 861.6,299.5 865.5,302.1 869.3,304.9 873.2,307.9 877.0,311.0 880.9,314.2 884.7,317.7 888.6,321.3 892.4,325.1 896.3,329.0 900.1,333.2 904.0,337.5 907.8,342.0 911.7,346.7 915.5,351.5 919.4,356.5 923.2,361.6 927.1,366.8 930.9,372.1 934.8,377.4 938.7,382.7 942.5,387.8 946.4,392.7 950.2,397.3 954.1,401.5 957.9,405.1 961.8,408.1 965.6,410.3 969.5,411.9 973.3,412.7 977.2,413.0 981.0,412.8 984.9,412.3 988.7,411.4 992.6,410.4 996.4,409.2 1000.3,408.0 1004.1,406.8 1008.0,405.6 1011.8,404.4 1015.7,403.3 1019.6,402.2 1023.4,401.2 1027.3,400.2 1031.1,399.3 1035.0,398.5 1038.8,397.7 1042.7,397.0 1046.5,396.2 1050.4,395.6 1054.2,394.9 1058.1,394.3 1061.9,393.6 1065.8,393.0 1069.6,392.4 1073.5,391.8 1077.3,391.1 1081.2,390.5 1085.0,389.8 1088.9,389.1 1092.8,388.4 1096.6,387.6 1100.5,386.8 1104.3,386.0 1108.2,385.1 1112.0,384.1 1115.9,383.0 1119.7,381.9 1123.6,380.8 1127.4,379.5 1131.3,378.2 1135.1,376.7 1139.0,375.2 1142.8,373.6 1146.7,371.9 1150.5,370.2 1154.4,368.3 1158.2,366.3 1162.1,364.3 1165.9,362.2 1169.8,360.0 1173.7,357.7 1177.5,355.3 1181.4,352.9 1185.2,350.4 1189.1,347.9 1192.9,345.3 1196.8,342.7 1200.6,340.0 1204.5,337.3 1208.3,334.6 1212.2,331.8 1216.0,329.1 1219.9,326.3 1223.7,323.6 1227.6,320.8 1231.4,318.1 1235.3,315.4 1239.1,312.8 1243.0,310.2"/><polyline points="707.5,303.4 711.4,303.5 715.2,303.5 719.1,303.6 722.9,303.7 726.8,303.8 730.6,303.8 734.5,303.9 738.3,304.1 742.2,304.2 746.0,304.3 749.9,304.5 753.7,304.7 757.6,304.9 761.4,305.1 765.3,305.3 769.1,305.6 773.0,305.9 776.8,306.2 780.7,306.6 784.6,307.0 788.4,307.4 792.3,307.9 796.1,308.4 800.0,309.0 803.8,309.7 807.7,310.4 811.5,311.2 815.4,312.1 819.2,313.0 823.1,314.0 826.9,315.2 830.8,316.4 834.6,317.7 838.5,319.2 842.3,320.8 846.2,322.5 850.0,324.3 853.9,326.3 857.7,328.4 861.6,330.6 865.5,333.1 869.3,335.6 873.2,338.4 877.0,341.3 880.9,344.4 884.7,347.6 888.6,351.1 892.4,354.7 896.3,358.5 900.1,362.5 904.0,366.7 907.8,371.1 911.7,375.7 915.5,380.4 919.4,385.3 923.2,390.4 927.1,395.6 930.9,400.9 934.8,406.3 938.7,411.7 942.5,417.0 946.4,422.1 950.2,427.0 954.1,431.4 957.9,435.3 961.8,438.6 965.6,441.1 969.5,442.9 973.3,443.9 977.2,444.3 981.0,444.2 984.9,443.6 988.7,442.7 992.6,441.6 996.4,440.3 1000.3,439.0 1004.1,437.7 1008.0,436.4 1011.8,435.1 1015.7,433.9 1019.6,432.7 1023.4,431.6 1027.3,430.5 1031.1,429.6 1035.0,428.7 1038.8,427.8 1042.7,427.0 1046.5,426.2 1050.4,425.4 1054.2,424.7 1058.1,424.0 1061.9,423.4 1065.8,422.7 1069.6,422.0 1073.5,421.3 1077.3,420.6 1081.2,419.9 1085.0,419.2 1088.9,418.5 1092.8,417.7 1096.6,416.8 1100.5,415.9 1104.3,415.0 1108.2,414.0 1112.0,413.0 1115.9,411.9 1119.7,410.7 1123.6,409.4 1127.4,408.0 1131.3,406.6 1135.1,405.1 1139.0,403.5 1142.8,401.8 1146.7,400.0 1150.5,398.1 1154.4,396.1 1158.2,394.1 1162.1,391.9 1165.9,389.7 1169.8,387.4 1173.7,385.0 1177.5,382.5 1181.4,380.0 1185.2,377.4 1189.1,374.7 1192.9,372.0 1196.8,369.3 1200.6,366.5 1204.5,363.7 1208.3,360.9 1212.2,358.0 1216.0,355.1 1219.9,352.2 1223.7,349.4 1227.6,346.5 1231.4,343.7 1235.3,340.8 1239.1,338.0 1243.0,335.3"/><polyline points="707.5,400.9 711.4,401.0 715.2,401.0 719.1,401.1 722.9,401.1 726.8,401.2 730.6,401.3 734.5,401.3 738.3,401.4 742.2,401.5 746.0,401.6 749.9,401.8 753.7,401.9 757.6,402.1 761.4,402.2 765.3,402.4 769.1,402.6 773.0,402.9 776.8,403.1 780.7,403.4 784.6,403.7 788.4,404.1 792.3,404.5 796.1,404.9 800.0,405.4 803.8,405.9 807.7,406.5 811.5,407.2 815.4,407.9 819.2,408.7 823.1,409.5 826.9,410.5 830.8,411.5 834.6,412.6 838.5,413.9 842.3,415.2 846.2,416.7 850.0,418.2 853.9,420.0 857.7,421.8 861.6,423.8 865.5,425.9 869.3,428.2 873.2,430.7 877.0,433.4 880.9,436.2 884.7,439.2 888.6,442.4 892.4,445.7 896.3,449.3 900.1,453.1 904.0,457.1 907.8,461.3 911.7,465.6 915.5,470.2 919.4,475.0 923.2,480.0 927.1,485.1 930.9,490.3 934.8,495.7 938.7,501.0 942.5,506.4 946.4,511.6 950.2,516.6 954.1,521.2 957.9,525.3 961.8,528.7 965.6,531.4 969.5,533.4 973.3,534.5 977.2,535.0 981.0,534.9 984.9,534.2 988.7,533.3 992.6,532.1 996.4,530.7 1000.3,529.3 1004.1,527.9 1008.0,526.4 1011.8,525.0 1015.7,523.7 1019.6,522.5 1023.4,521.3 1027.3,520.2 1031.1,519.1 1035.0,518.1 1038.8,517.2 1042.7,516.3 1046.5,515.5 1050.4,514.7 1054.2,513.9 1058.1,513.1 1061.9,512.4 1065.8,511.7 1069.6,511.0 1073.5,510.2 1077.3,509.5 1081.2,508.8 1085.0,508.0 1088.9,507.2 1092.8,506.3 1096.6,505.4 1100.5,504.5 1104.3,503.5 1108.2,502.4 1112.0,501.3 1115.9,500.1 1119.7,498.9 1123.6,497.5 1127.4,496.1 1131.3,494.6 1135.1,493.0 1139.0,491.3 1142.8,489.5 1146.7,487.6 1150.5,485.6 1154.4,483.6 1158.2,481.4 1162.1,479.2 1165.9,476.9 1169.8,474.4 1173.7,472.0 1177.5,469.4 1181.4,466.8 1185.2,464.1 1189.1,461.3 1192.9,458.5 1196.8,455.6 1200.6,452.7 1204.5,449.8 1208.3,446.8 1212.2,443.9 1216.0,440.8 1219.9,437.8 1223.7,434.8 1227.6,431.8 1231.4,428.7 1235.3,425.7 1239.1,422.7 1243.0,419.7"/></g></svg>
<div class="t" style="left:687.5px;top:151.2px;font-size:9px;color:#3434e6">5.00</div>
<div class="t" style="left:687.5px;top:190.2px;font-size:9px;color:#3434e6">0.00</div>
<div class="t" style="left:684.5px;top:229.2px;font-size:9px;color:#3434e6">-5.00</div>
<div class="t" style="left:679.5px;top:268.2px;font-size:9px;color:#3434e6">-10.00</div>
<div class="t" style="left:679.5px;top:307.2px;font-size:9px;color:#3434e6">-15.00</div>
<div class="t" style="left:679.5px;top:346.2px;font-size:9px;color:#3434e6">-20.00</div>
<div class="t" style="left:679.5px;top:385.2px;font-size:9px;color:#3434e6">-25.00</div>
<div class="t" style="left:679.5px;top:424.2px;font-size:9px;color:#3434e6">-30.00</div>
<div class="t" style="left:679.5px;top:463.2px;font-size:9px;color:#3434e6">-35.00</div>
<div class="t" style="left:679.5px;top:502.2px;font-size:9px;color:#3434e6">-40.00</div>
<div class="t" style="left:708px;top:508.0px;font-size:9px;color:#3434e6;">10</div>
<div class="t" style="left:862.5px;top:508.0px;font-size:9px;color:#3434e6;">100</div>
<div class="t" style="left:1027px;top:508.0px;font-size:9px;color:#3434e6;">1K</div>
<div class="t" style="left:1186px;top:508.0px;font-size:9px;color:#3434e6;">10K</div>
<div class="t" style="left:1235px;top:508.0px;font-size:9px;color:#3434e6;">20K</div>
<div class="t" style="left:707.5px;top:519.0px;font-size:9px;color:#3434e6;text-decoration:underline">dB(v(out))</div>
<div class="t" style="left:922px;top:529.5px;font-size:9px;color:#3434e6;">F (Hz)</div>
<div class="t" style="left:893px;top:144px;font-size:9px;color:#3434e6;transform:scaleX(0.9830);transform-origin:0 0;">Тонкомпенсация из веги 2.cir Run=1...13</div>
<div class="a " style="left:0px;top:585px;width:1280px;height:24px;background:#f0f0f0"></div>
<div class="a " style="left:4px;top:584px;width:53px;height:1px;background:#8a8a8a"></div>
<div class="a " style="left:4px;top:600px;width:52px;height:1px;background:#8c8c8c"></div>
<div class="a " style="left:4px;top:601px;width:52px;height:1px;background:#d8d8d8"></div>
<div class="a " style="left:58px;top:585px;width:138px;height:17px;background:#f0f0f0;border-right:1px solid #6a6a6a;border-bottom:1px solid #6a6a6a;border-left:1px solid #fafafa;box-sizing:border-box"></div>
<div class="a " style="left:59px;top:584px;width:136px;height:1px;background:#f0f0f0"></div>
<div class="a " style="left:60px;top:602px;width:137px;height:1px;background:#b8b8b8"></div>
<div class="t" style="left:8px;top:588px;font-size:10px;color:#333;transform:scaleX(0.8434);transform-origin:0 0;">AC Analysis</div>
<div class="t" style="left:64px;top:589.5px;font-size:10px;color:#111;transform:scaleX(0.9330);transform-origin:0 0;">Тонкомпенсация из веги 2.cir</div>
<div class="a " style="left:0px;top:608px;width:1280px;height:1px;background:#b4b4b4"></div>
<div class="a " style="left:0px;top:609px;width:1280px;height:58px;background:#fff"></div>
<svg style="left:3px;top:614px" width="6" height="6"><path d="M0.5 0.500l4.500 4.500M5 0.500l-4.500 4.500" stroke="#000" stroke-width="1.500" fill="none"/></svg>
<div class="a " style="left:4px;top:624px;width:1px;height:40px;background:#b0b0b0"></div>
<div class="a " style="left:5px;top:624px;width:1px;height:40px;background:#fff"></div>
<div class="a " style="left:7px;top:624px;width:1px;height:40px;background:#b0b0b0"></div>
<div class="a " style="left:0px;top:667px;width:1280px;height:20px;background:#f0f0f0"></div>
<div class="a " style="left:0px;top:667px;width:1280px;height:1px;background:#d0d0d0"></div>
<div class="a " style="left:0px;top:669px;width:132px;height:17px;border:1px solid #b2b2b2;border-right-color:#fff;border-bottom-color:#fff;box-sizing:border-box"></div>
<div class="a " style="left:134px;top:669px;width:898px;height:17px;border:1px solid #b2b2b2;border-right-color:#fff;border-bottom-color:#fff;box-sizing:border-box"></div>
<div class="a " style="left:1034px;top:669px;width:160px;height:17px;border:1px solid #b2b2b2;border-right-color:#fff;border-bottom-color:#fff;box-sizing:border-box"></div>
<div class="a " style="left:1196px;top:669px;width:84px;height:17px;border:1px solid #b2b2b2;border-right-color:#fff;border-bottom-color:#fff;box-sizing:border-box"></div>
<div class="t" style="left:2px;top:672px;font-size:12.5px;color:#1a1a1a;transform:scaleX(0.9499);transform-origin:0 0;">Select Mode</div>
<div class="t" style="left:136px;top:672px;font-size:12.5px;color:#1a1a1a;transform:scaleX(0.9685);transform-origin:0 0;">Drawing area</div>
<div class="t" style="left:1036px;top:672px;font-size:12.5px;color:#1a1a1a;transform:scaleX(0.9423);transform-origin:0 0;">Grid 20,29</div>
<div class="a " style="left:0px;top:687px;width:1280px;height:33px;background:#1d1d1d"></div>
<div class="a " style="left:455px;top:687px;width:41px;height:33px;background:#4b4b4b"></div>
<div class="a " style="left:169px;top:718.5px;width:33px;height:1.5px;background:#b4b4b4"></div>
<div class="a " style="left:210px;top:718.5px;width:34px;height:1.5px;background:#b4b4b4"></div>
<div class="a " style="left:251.5px;top:718.5px;width:33.5px;height:1.5px;background:#b4b4b4"></div>
<div class="a " style="left:455px;top:718.5px;width:41px;height:1.5px;background:#b4b4b4"></div>
<div class="a " style="left:623.5px;top:718.5px;width:33.5px;height:1.5px;background:#b4b4b4"></div>
<svg style="left:0;top:0" width="1280" height="720"><g fill="#fff"><path d="M13 698.200l6.200-.900v5.700H13zM20 697.200l7-1v6.800h-7zM13 703.800h6.200v5.700l-6.200-.900zM20 703.800h7v6.800l-7-1z"/></g><g fill="none" stroke="#fff" stroke-width="2"><circle cx="62" cy="701.500" r="6.300"/><path d="M57.500 706.500l-6 6.200" stroke-width="2.400"/></g><g font-family="Liberation Sans" font-weight="bold"><text x="92.500" y="702" font-size="10.500" fill="#55c030" textLength="13.500" lengthAdjust="spacingAndGlyphs">mp</text><text x="106" y="701.500" font-size="10.500" fill="#3a8ee0">3</text><path d="M98 705.500h12.500M104 700v10.500M104 708.500h4" stroke="#d8d8d8" stroke-width="1.200" fill="none"/><circle cx="99.500" cy="707.800" r="1.900" fill="none" stroke="#c8c8c8" stroke-width="1.100"/></g><g><path d="M136 707.500v-4a8 8 0 0 1 16 0v4" fill="none" stroke="#1818e0" stroke-width="2.200"/><rect x="134.300" y="703.500" width="3.400" height="6.500" rx="1.500" fill="#1818e0"/><rect x="150.300" y="703.500" width="3.400" height="6.500" rx="1.500" fill="#1818e0"/><ellipse cx="144" cy="702.800" rx="4.600" ry="2.800" fill="#f0c020"/><rect x="139.400" y="703.600" width="9.200" height="2.400" fill="#e02020"/><path d="M139.400 706.500h9.200c0 2-2 3.200-4.600 3.200s-4.600-1.200-4.600-3.200z" fill="#e8a818"/><path d="M140.500 704.800h7" stroke="#f8e060" stroke-width=".7"/></g><g><circle cx="185.500" cy="703.500" r="8" fill="none" stroke="#f5c518" stroke-width="3"/><path d="M185 694l7 1" stroke="#1d1d1d" stroke-width="5"/><circle cx="184" cy="705" r="3.200" fill="#f05030"/><path d="M186.500 705v-9.500l4.500 1.200v2.300l-3-.800" fill="none" stroke="#f05030" stroke-width="1.600"/></g><g><circle cx="227" cy="703" r="9.800" fill="#e33b2e"/><path d="M227 703l-8.500 4.900a9.800 9.800 0 0 0 8.500 4.900l4.900-8.500z" fill="#2da94f"/><path d="M227 703h9.800a9.800 9.800 0 0 1-9.800 9.800l4.900-8.500z" fill="#fdd23b"/><path d="M218.500 707.900a9.800 9.800 0 0 1 0-9.800l4 2.500z" fill="#2da94f"/><path d="M227 693.200a9.800 9.800 0 0 1 9.600 7.800h-9.600z" fill="#e33b2e"/><path d="M236.600 700.500a9.800 9.800 0 0 1-4.700 11l-1-7z" fill="#fdd23b"/><circle cx="227" cy="703" r="4.600" fill="#fff"/><circle cx="227" cy="703" r="3.600" fill="#3b82f0"/></g><g><path d="M258.500 699.500l4.500-3.500h10l4.500 3.500-9.500 10.500z" fill="#e01818"/><path d="M262.500 698.500h3.500l2 3 2-3h3.500l-5.500 8z" fill="#f8d020"/></g><g><circle cx="309" cy="703" r="8.200" fill="#f6b818"/><path d="M309 698.500l4.500 7.500h-9z" fill="none" stroke="#141414" stroke-width="1.800" stroke-linejoin="round"/></g><g><path d="M350.500 693.500c7 0 9.500 2.500 9.500 9s-3 9-9 9c-1 0-2 0-2.500-.200l-3 2.700v-3.500c-2.500-1.500-4-3.500-4-8s2.500-9 9-9z" fill="#8b7cf0"/><path d="M347 698.500c-.800.800-.500 3 1.500 5.500s4.500 3.500 5.500 3c1-.500 1-1.500.500-2l-1.500-1-1 .800c-1-.500-2.300-1.800-2.800-3l.800-.800-.800-1.800c-.500-.700-1.400-.900-2.200-.700z" fill="#fff"/></g><g transform="translate(392 0) scale(.86 1) translate(-392 0)"><path d="M384.500 695l3.500 3.500h8l3.500-3.500.500 8c0 3-3 7-8 8-5-1-8-5-8-8z" fill="#fff"/><ellipse cx="388.800" cy="704.500" rx="2" ry="2.800" fill="#1d1d1d" transform="rotate(-25 388.800 704.500)"/><ellipse cx="395.200" cy="704.500" rx="2" ry="2.800" fill="#1d1d1d" transform="rotate(25 395.200 704.500)"/><rect x="391.200" y="708.500" width="1.600" height="1.500" fill="#1d1d1d"/></g><g><circle cx="433" cy="703.500" r="10" fill="#fff"/><path d="M428.500 698l4.700 5.700v6" fill="none" stroke="#f04a28" stroke-width="2.300" stroke-linecap="round"/><path d="M437.800 698l-4.600 5.700" fill="none" stroke="#f040a0" stroke-width="2.300" stroke-linecap="round"/></g><g><circle cx="474.700" cy="703" r="10" fill="#d8b438"/><circle cx="474.700" cy="703" r="10" fill="none" stroke="#b88a28" stroke-width="1.200" stroke-dasharray="3 2"/><circle cx="474.700" cy="703" r="7.400" fill="#7cc440"/><rect x="471.200" y="697.500" width="2.300" height="11" fill="#2a3010"/><rect x="476" y="697.500" width="2.300" height="11" fill="#2a3010"/></g><g fill="#14c814"><circle cx="514.500" cy="704.500" r="7"/><rect x="511.500" y="693.500" width="6" height="5" rx="1"/><rect x="520" y="701.500" width="6" height="6" rx="1"/><circle cx="514.500" cy="704.500" r="2" fill="#fff"/></g><g><path d="M549.500 695h15.500l-.500 15.500h-16z" fill="#f4f0e4"/><rect x="549.500" y="694" width="15.500" height="3" fill="#d8c878"/><path d="M551 700h12M551 703h12M551 706h10" stroke="#c8c4b8" stroke-width=".8"/><path d="M554 707l8.500-6 2 2.300-8.500 5.500-3 .700z" fill="#e0a848"/><path d="M562.500 701l1.500-1 2 2.300-1.500 1z" fill="#d06060"/></g><g fill="#fff"><rect x="594.500" y="694.500" width="8" height="6.500" rx="1"/><path d="M595.500 696h6M595.500 697.800h6M595.500 699.500h6" stroke="#777" stroke-width=".7"/><rect x="597.300" y="701" width="2.400" height="3"/><rect x="590.500" y="703.500" width="16" height="2.400"/><path d="M597 705.500l-5.500 6h3l4-4.500 4 4.500h3l-5.500-6z"/></g><g><circle cx="639.500" cy="702" r="9" fill="#2a9fe0"/><path d="M634 702.500l10.500-4.500-2 9-3-2.300-1.800 1.800-.300-2.800 5-4.500-6 3.800z" fill="#fff"/><circle cx="645.500" cy="709" r="5" fill="#9a9a9a"/><text x="645.500" y="711.500" font-size="6.500" font-weight="bold" fill="#fff" text-anchor="middle" font-family="Liberation Sans">13</text></g><g><rect x="671.500" y="693.500" width="20" height="19.500" fill="#15202a" stroke="#2a7fb4" stroke-width="1.200"/><rect x="674.500" y="698" width="14" height="10.500" fill="#f4f4f4"/><rect x="678" y="700" width="7" height="6.500" fill="#15202a"/><g fill="#15202a"><rect x="675.300" y="699.500" width="1.500" height="1.500"/><rect x="675.300" y="702.500" width="1.500" height="1.500"/><rect x="675.300" y="705.500" width="1.500" height="1.500"/><rect x="686.200" y="699.500" width="1.500" height="1.500"/><rect x="686.200" y="702.500" width="1.500" height="1.500"/><rect x="686.200" y="705.500" width="1.500" height="1.500"/></g></g><g><path d="M722.500 693.500c5 0 9 3 9 7 0 5-5 10-8.500 11.500-4-2-9-6-9-11.500 0-4 3.500-7 8.500-7z" fill="#c86a58"/><path d="M722.500 693.500c5 0 9 3 9 7-3-3-8-4-12-3.500-2 .300-4 1.200-5 2.500.500-3.500 3.500-6 8-6z" fill="#3a8ad8"/><path d="M714 700c2-2 5-2.500 7-1.500 3 3 4 8 2 13.500-4-2-9-6-9-12z" fill="#6cc040"/><path d="M720 698.500c3 3 4.500 8 3 13.500" stroke="#fff" stroke-width="1" fill="none"/></g><g fill="none" stroke="#fff" stroke-width="1.200"><path d="M1073 706l5-5 5 5"/></g><path d="M1092 702.500l12-5.500-2.500 11-3.500-3-2.200 2.200-.300-3.400 5.500-5-7 4z" fill="#fff"/><circle cx="1095" cy="707.500" r="1.300" fill="#999"/><g fill="none" stroke="#fff" stroke-width="1"><path d="M1113.500 700.500h2.500l3-3v10l-3-3h-2.500z"/><path d="M1121 700c1 1.500 1 3.500 0 5M1123 698.500c2 2.500 2 5.500 0 8M1125 697c3 3.500 3 7.500 0 11" stroke-width=".9"/></g><g fill="none" stroke="#ddd" stroke-width="1.300"><path d="M1134 707a10 10 0 0 1 10-10" opacity=".75"/><path d="M1137 707a7 7 0 0 1 7-7" opacity=".85"/><path d="M1140 707a4 4 0 0 1 4-4"/></g><circle cx="1143.500" cy="706.500" r="1.200" fill="#fff"/><g><path d="M1244.500 695.500h14.500v10.500h-4v3.500l-3.500-3.500h-7z" fill="#fff"/><path d="M1247 698.500h9.500M1247 701h9.500M1247 703.500h6" stroke="#1d1d1d" stroke-width=".9"/><circle cx="1256.500" cy="708" r="3" fill="#1d1d1d" stroke="#fff" stroke-width=".8"/><text x="1256.500" y="710" font-size="5" fill="#fff" text-anchor="middle" font-family="Liberation Sans">3</text></g></svg>
<div class="t" style="left:1154px;top:698px;font-size:10.5px;color:#fff;transform:scaleX(0.8350);transform-origin:0 0;">ENG</div>
<div class="t" style="left:1195px;top:692px;font-size:9.8px;color:#fff;transform:scaleX(0.9586);transform-origin:0 0;">01:12</div>
<div class="t" style="left:1184.5px;top:706.5px;font-size:9.8px;color:#fff;transform:scaleX(0.9523);transform-origin:0 0;">15.11.2025</div>
<div class="a " style="left:120.5px;top:38.5px;width:1px;height:21px;background:#bdbdbd"></div>
<div class="a " style="left:121.5px;top:38.5px;width:1px;height:21px;background:#fcfcfc"></div>
<div class="a " style="left:262px;top:38.5px;width:1px;height:21px;background:#bdbdbd"></div>
<div class="a " style="left:263px;top:38.5px;width:1px;height:21px;background:#fcfcfc"></div>
<div class="a " style="left:498.5px;top:38.5px;width:1px;height:21px;background:#bdbdbd"></div>
<div class="a " style="left:499.5px;top:38.5px;width:1px;height:21px;background:#fcfcfc"></div>
<div class="a " style="left:600px;top:41px;width:1px;height:16px;background:#bdbdbd"></div>
<div class="a " style="left:601px;top:41px;width:1px;height:16px;background:#fcfcfc"></div>
<div class="a " style="left:732px;top:41px;width:1px;height:16px;background:#bdbdbd"></div>
<div class="a " style="left:733px;top:41px;width:1px;height:16px;background:#fcfcfc"></div>
<div class="a " style="left:792.5px;top:39px;width:21.0px;height:21px;background:#f8f8f8;border:1px solid #a0a0a0;border-right-color:#fdfdfd;border-bottom-color:#fdfdfd;box-sizing:border-box"></div>
<div class="a " style="left:814px;top:41px;width:1px;height:16px;background:#bdbdbd"></div>
<div class="a " style="left:815px;top:41px;width:1px;height:16px;background:#fcfcfc"></div>
<div class="a " style="left:13.5px;top:94px;width:19.0px;height:19px;background:#f8f8f8;border:1px solid #a0a0a0;border-right-color:#fdfdfd;border-bottom-color:#fdfdfd;box-sizing:border-box"></div>
<div class="a " style="left:296.8px;top:94.5px;width:1px;height:18px;background:#bdbdbd"></div>
<div class="a " style="left:297.8px;top:94.5px;width:1px;height:18px;background:#fcfcfc"></div>
<div class="a " style="left:299.5px;top:94px;width:19.0px;height:19px;background:#f8f8f8;border:1px solid #a0a0a0;border-right-color:#fdfdfd;border-bottom-color:#fdfdfd;box-sizing:border-box"></div>
<div class="a " style="left:318.5px;top:94px;width:19.5px;height:19px;background:#f8f8f8;border:1px solid #a0a0a0;border-right-color:#fdfdfd;border-bottom-color:#fdfdfd;box-sizing:border-box"></div>
<div class="a " style="left:613.5px;top:94.5px;width:1px;height:18px;background:#bdbdbd"></div>
<div class="a " style="left:614.5px;top:94.5px;width:1px;height:18px;background:#fcfcfc"></div>
<div class="a " style="left:35.3px;top:117.5px;width:1px;height:17px;background:#bdbdbd"></div>
<div class="a " style="left:36.3px;top:117.5px;width:1px;height:17px;background:#fcfcfc"></div>
<div class="a " style="left:134.8px;top:117.5px;width:1px;height:17px;background:#bdbdbd"></div>
<div class="a " style="left:135.8px;top:117.5px;width:1px;height:17px;background:#fcfcfc"></div>
<div class="a " style="left:177.3px;top:117.5px;width:1px;height:17px;background:#bdbdbd"></div>
<div class="a " style="left:178.3px;top:117.5px;width:1px;height:17px;background:#fcfcfc"></div>
<div class="a " style="left:200.8px;top:117.5px;width:1px;height:17px;background:#bdbdbd"></div>
<div class="a " style="left:201.8px;top:117.5px;width:1px;height:17px;background:#fcfcfc"></div>
<div class="a " style="left:243.3px;top:117.5px;width:1px;height:17px;background:#bdbdbd"></div>
<div class="a " style="left:244.3px;top:117.5px;width:1px;height:17px;background:#fcfcfc"></div>
<div class="a " style="left:285.8px;top:117.5px;width:1px;height:17px;background:#bdbdbd"></div>
<div class="a " style="left:286.8px;top:117.5px;width:1px;height:17px;background:#fcfcfc"></div>
<div class="a " style="left:347.3px;top:117.5px;width:1px;height:17px;background:#bdbdbd"></div>
<div class="a " style="left:348.3px;top:117.5px;width:1px;height:17px;background:#fcfcfc"></div>
<div class="a " style="left:370.8px;top:117.5px;width:1px;height:17px;background:#bdbdbd"></div>
<div class="a " style="left:371.8px;top:117.5px;width:1px;height:17px;background:#fcfcfc"></div>
<div class="a " style="left:727px;top:94px;width:18px;height:19px;background:#f8f8f8;border:1px solid #a0a0a0;border-right-color:#fdfdfd;border-bottom-color:#fdfdfd;box-sizing:border-box"></div>
<div class="a " style="left:862.3px;top:94.5px;width:1px;height:18px;background:#bdbdbd"></div>
<div class="a " style="left:863.3px;top:94.5px;width:1px;height:18px;background:#fcfcfc"></div>
<div class="a " style="left:886px;top:94.5px;width:1px;height:18px;background:#bdbdbd"></div>
<div class="a " style="left:887px;top:94.5px;width:1px;height:18px;background:#fcfcfc"></div>
<div class="a " style="left:947.3px;top:94.5px;width:1px;height:18px;background:#bdbdbd"></div>
<div class="a " style="left:948.3px;top:94.5px;width:1px;height:18px;background:#fcfcfc"></div>
<div class="a " style="left:990.3px;top:94.5px;width:1px;height:18px;background:#bdbdbd"></div>
<div class="a " style="left:991.3px;top:94.5px;width:1px;height:18px;background:#fcfcfc"></div>
<div class="a " style="left:1032.3px;top:94.5px;width:1px;height:18px;background:#bdbdbd"></div>
<div class="a " style="left:1033.3px;top:94.5px;width:1px;height:18px;background:#fcfcfc"></div>
<div class="a " style="left:1035px;top:94px;width:19px;height:19px;background:#f8f8f8;border:1px solid #a0a0a0;border-right-color:#fdfdfd;border-bottom-color:#fdfdfd;box-sizing:border-box"></div>
<div class="a " style="left:1054px;top:94px;width:19px;height:19px;background:#f8f8f8;border:1px solid #a0a0a0;border-right-color:#fdfdfd;border-bottom-color:#fdfdfd;box-sizing:border-box"></div>
<div class="a " style="left:1073px;top:94px;width:18.5px;height:19px;background:#f8f8f8;border:1px solid #a0a0a0;border-right-color:#fdfdfd;border-bottom-color:#fdfdfd;box-sizing:border-box"></div>
<div class="a " style="left:1113.5px;top:94.5px;width:1px;height:18px;background:#bdbdbd"></div>
<div class="a " style="left:1114.5px;top:94.5px;width:1px;height:18px;background:#fcfcfc"></div>
<div class="a " style="left:1155.8px;top:94.5px;width:1px;height:18px;background:#bdbdbd"></div>
<div class="a " style="left:1156.8px;top:94.5px;width:1px;height:18px;background:#fcfcfc"></div>
<div class="a " style="left:1236.8px;top:94.5px;width:1px;height:18px;background:#bdbdbd"></div>
<div class="a " style="left:1237.8px;top:94.5px;width:1px;height:18px;background:#fcfcfc"></div>
<div class="a " style="left:1259.8px;top:94.5px;width:1px;height:18px;background:#bdbdbd"></div>
<div class="a " style="left:1260.8px;top:94.5px;width:1px;height:18px;background:#fcfcfc"></div>
<div class="a " style="left:676px;top:116.5px;width:18.5px;height:19.0px;background:#f8f8f8;border:1px solid #a0a0a0;border-right-color:#fdfdfd;border-bottom-color:#fdfdfd;box-sizing:border-box"></div>
<div class="a " style="left:888px;top:117.5px;width:1px;height:17px;background:#bdbdbd"></div>
<div class="a " style="left:889px;top:117.5px;width:1px;height:17px;background:#fcfcfc"></div>
<div class="a " style="left:924.3px;top:117.5px;width:1px;height:17px;background:#bdbdbd"></div>
<div class="a " style="left:925.3px;top:117.5px;width:1px;height:17px;background:#fcfcfc"></div>
<div class="a " style="left:947.3px;top:117.5px;width:1px;height:17px;background:#bdbdbd"></div>
<div class="a " style="left:948.3px;top:117.5px;width:1px;height:17px;background:#fcfcfc"></div>
<div class="a " style="left:970.5px;top:117.5px;width:1px;height:17px;background:#bdbdbd"></div>
<div class="a " style="left:971.5px;top:117.5px;width:1px;height:17px;background:#fcfcfc"></div>
<div class="a " style="left:973.5px;top:116.5px;width:19.5px;height:19.0px;background:#f8f8f8;border:1px solid #a0a0a0;border-right-color:#fdfdfd;border-bottom-color:#fdfdfd;box-sizing:border-box"></div>
<div class="a " style="left:993px;top:116.5px;width:19.5px;height:19.0px;background:#f8f8f8;border:1px solid #a0a0a0;border-right-color:#fdfdfd;border-bottom-color:#fdfdfd;box-sizing:border-box"></div>
<div class="a " style="left:1074.8px;top:117.5px;width:1px;height:17px;background:#bdbdbd"></div>
<div class="a " style="left:1075.8px;top:117.5px;width:1px;height:17px;background:#fcfcfc"></div>
<div class="a " style="left:1129.8px;top:117.5px;width:1px;height:17px;background:#bdbdbd"></div>
<div class="a " style="left:1130.8px;top:117.5px;width:1px;height:17px;background:#fcfcfc"></div>
<svg style="left:0;top:0" width="1280" height="160"><!--ICONSVG--><g transform="translate(12.5,49.3) scale(0.84) translate(-8,-8)"><rect x="2" y="2" width="6" height="6" fill="#f6f6f6" stroke="#d0d0d0" stroke-width="1" rx="0" /><path d="M4.5 3.5h6l3 3v7.5h-9z" fill="#fff" stroke="#c4c4c4" stroke-width="1"/><path d="M10.5 3.5v3h3" fill="#e8e8e8" stroke="#c4c4c4" stroke-width="0.8"/></g><g transform="translate(30.6,49.3) scale(0.84) translate(-8,-8)"><path d="M1.500 5h4l1.500 1.500h6v7h-11.500z" fill="#c9c9c9" /><path d="M3.500 7.500h11l-2 6h-11z" fill="#b4b4b4" /><path d="M11 4.500l2.500-1.500" fill="none" stroke="#b0b0b0" stroke-width="1" /></g><g transform="translate(50.0,49.3) scale(0.84) translate(-8,-8)"><rect x="2" y="2.5" width="12" height="12" fill="#3b3fb4" stroke="#2a2e90" stroke-width="1" rx="0.8" /><rect x="4.5" y="2.8" width="7" height="4.6" fill="#f4f6ff" stroke="none" stroke-width="1" rx="0" /><rect x="5.5" y="10" width="5.5" height="4.5" fill="#2a2c70" stroke="none" stroke-width="1" rx="0" /><rect x="8.8" y="10.8" width="1.6" height="3" fill="#e8e8f8" stroke="none" stroke-width="1" rx="0" /><path d="M2.500 8l3-1.500v3z" fill="#8a8ef0" /></g><g transform="translate(69.4,49.3) scale(0.84) translate(-8,-8)"><path d="M3 2h7l3 3v9.5h-10z" fill="#fafafa" stroke="#bdbdbd" stroke-width="1"/><path d="M10 2v3h3" fill="#e8e8e8" stroke="#bdbdbd" stroke-width="0.8"/><path d="M6 9.500h4M8.500 7.500l2 2-2 2" fill="none" stroke="#9a9a9a" stroke-width="1.2" /><circle cx="7" cy="7" r="1" fill="#aaa" stroke="none" stroke-width="1"/></g><g transform="translate(88.0,49.3) scale(0.84) translate(-8,-8)"><path d="M2.5 1.5h6.5l3 3v9.5h-9.5z" fill="#fbfbff" stroke="#8a94b0" stroke-width="1"/><path d="M9.0 1.5v3h3" fill="#e8e8e8" stroke="#8a94b0" stroke-width="0.8"/><path d="M11.540000000000001 10.540000000000001l3.2 3.2" stroke="#d8902a" stroke-width="2.6" stroke-linecap="round"/><circle cx="9.3" cy="8.3" r="3.2" fill="#d6e2f2" stroke="#7a869c" stroke-width="1.3"/></g><g transform="translate(108.0,49.3) scale(0.84) translate(-8,-8)"><rect x="4" y="2.5" width="8" height="4" fill="#fff" stroke="#9aa0b8" stroke-width="1" rx="0" /><rect x="1.5" y="6" width="13" height="6" fill="#c8cee8" stroke="#6a72a8" stroke-width="1" rx="1.5" /><rect x="3.5" y="9.5" width="9" height="4.5" fill="#fdfdfd" stroke="#8088b0" stroke-width="1" rx="0" /><rect x="8" y="10.5" width="5.5" height="2" fill="#3cb43c" stroke="none" stroke-width="1" rx="0" /></g><g transform="translate(134.4,49.3) scale(0.84) translate(-8,-8)"><path d="M12 13c2-4 .500-8.500-4.500-8.500h-2" fill="none" stroke="#2a5fd0" stroke-width="2.6" /><path d="M2 4.700l5.200-3.800v7.600z" fill="#2a5fd0" /></g><g transform="translate(153.8,49.3) scale(0.84) translate(-8,-8)"><path d="M4 13c-2-4-.500-8 4.500-8h1.500" fill="none" stroke="#c4c4c4" stroke-width="2.2" /><path d="M14 5l-5-3.500v7z" fill="#c4c4c4" /></g><g transform="translate(172.5,49.3) scale(0.84) translate(-8,-8)"><path d="M6 2l3.500 8M10.500 2l-3.500 8" fill="none" stroke="#b0b0b0" stroke-width="1.3" /><circle cx="5.3" cy="12" r="1.8" fill="none" stroke="#b0b0b0" stroke-width="1.3"/><circle cx="11" cy="12" r="1.8" fill="none" stroke="#b0b0b0" stroke-width="1.3"/></g><g transform="translate(191.0,49.3) scale(0.84) translate(-8,-8)"><path d="M2 1.5h5.5l2 2v7h-7.5z" fill="#f6f6f6" stroke="#c8c8c8" stroke-width="1"/><path d="M7.5 1.5v2h2" fill="#e8e8e8" stroke="#c8c8c8" stroke-width="0.8"/><path d="M6.5 5h5.5l2 2v7.5h-7.5z" fill="#f4f4fa" stroke="#c4c4d0" stroke-width="1"/><path d="M12.0 5v2h2" fill="#e8e8e8" stroke="#c4c4d0" stroke-width="0.8"/></g><g transform="translate(210.6,49.3) scale(0.84) translate(-8,-8)"><rect x="1.5" y="2.5" width="10" height="12" fill="#e8b820" stroke="#a87c10" stroke-width="1" rx="1" /><rect x="4" y="1.5" width="5" height="2.5" fill="#c0c0c0" stroke="#808080" stroke-width="0.8" rx="0" /><path d="M7 6h5.5l2 2v6.5h-7.5z" fill="#dfe6f6" stroke="#5868a0" stroke-width="1"/><path d="M12.5 6v2h2" fill="#e8e8e8" stroke="#5868a0" stroke-width="0.8"/><path d="M8.500 10h4M8.500 12h4" fill="none" stroke="#6878b0" stroke-width="0.9" /></g><g transform="translate(230.6,49.3) scale(0.84) translate(-8,-8)"><path d="M3 3l10 10M13 3l-10 10" fill="none" stroke="#a8a8a8" stroke-width="1.5" /></g><g transform="translate(248.8,49.3) scale(0.84) translate(-8,-8)"><path d="M2 2.500h10M2 5.500h9M2 8.500h6M2 11.500h5" fill="none" stroke="#7a8cb0" stroke-width="1.2" stroke-dasharray="2 1"/><path d="M2 2.500v9M12 2.500v4" fill="none" stroke="#7a8cb0" stroke-width="1" stroke-dasharray="1.500 1"/><path d="M9 6.500l5 4.500-2.200.200 1.200 2.600-1.200.500-1.100-2.600-1.700 1.400z" fill="#fff" stroke="#4a5a80" stroke-width="0.800"/></g><g transform="translate(275.0,49.3) scale(0.84) translate(-8,-8)"><path d="M8 1.500v8" fill="none" stroke="#111" stroke-width="1.3" /><path d="M4.500 7h7l-3.500 4z" fill="#111" /><path d="M5 12.300h6M6.500 14.300h3" fill="none" stroke="#111" stroke-width="1.1" /></g><g transform="translate(294.0,49.3) scale(0.84) translate(-8,-8)"><path d="M1 8h2.500l1.500-2.500 2.500 4.500 2.500-4.500 2 3 .800-.500h2.200" fill="none" stroke="#111" stroke-width="1.3" /></g><g transform="translate(313.0,49.3) scale(0.84) translate(-8,-8)"><path d="M1 8h5.500M9.500 8h5.500" fill="none" stroke="#111" stroke-width="1.3" /><path d="M6.500 3v10M9.500 3v10" fill="none" stroke="#111" stroke-width="1.6" /></g><g transform="translate(332.0,49.3) scale(0.84) translate(-8,-8)"><path d="M0.500 9.500h2c0-6 2.800-6 2.800 0 0-6 2.800-6 2.800 0 0-6 2.800-6 2.800 0 0-6 2.800-6 2.800 0h2" fill="none" stroke="#333" stroke-width="1.2" /></g><g transform="translate(352.0,49.3) scale(0.84) translate(-8,-8)"><path d="M1 8h14" fill="none" stroke="#111" stroke-width="1.3" /><path d="M5 4v8l6-4z" fill="#111" /><path d="M11 4v8" fill="none" stroke="#111" stroke-width="1.6" /></g><g transform="translate(370.0,49.3) scale(0.84) translate(-8,-8)"><path d="M1.500 8h5M6.500 3.500v9M6.500 6.500l5-4M6.500 9.500l5 4" fill="none" stroke="#111" stroke-width="1.3" /><path d="M11.500 13.500l-3.500-.500 2-2.500z" fill="#111" /></g><g transform="translate(390.0,49.3) scale(0.84) translate(-8,-8)"><path d="M1 8h5M6 3v10M8.500 2.500v3M8.500 6.500v3M8.500 10.500v3M8.500 4h5M8.500 8h5M8.500 12h5M13.500 4v-2.500M13.500 8v6.500" fill="none" stroke="#111" stroke-width="1.3" /><path d="M9 8l3-2v4z" fill="#111" /></g><g transform="translate(408.8,49.3) scale(0.84) translate(-8,-8)"><path d="M4 2v12l10-6zM1 5h3M1 11h3M6 2.500v2M6 11.500v2" fill="none" stroke="#111" stroke-width="1.2" /><path d="M5 5.500h2M6 4.500v2M5 10.500h2" fill="none" stroke="#111" stroke-width="0.8" /></g><g transform="translate(427.5,49.3) scale(0.84) translate(-8,-8)"><rect x="1.5" y="4" width="13" height="8" fill="none" stroke="#111" stroke-width="1.3" rx="2.5" /><path d="M4 10v-4h2.500v4h2.500v-4h2.500v4" fill="none" stroke="#111" stroke-width="1" /></g><g transform="translate(447.5,49.3) scale(0.84) translate(-8,-8)"><path d="M1 8h5.500M9.500 8h5.500" fill="none" stroke="#111" stroke-width="1.3" /><path d="M6.500 4v8" fill="none" stroke="#111" stroke-width="1.3" /><path d="M9.500 2.500v11" fill="none" stroke="#111" stroke-width="1.7" /></g><g transform="translate(467.5,49.3) scale(0.84) translate(-8,-8)"><circle cx="8" cy="8" r="4.2" fill="none" stroke="#111" stroke-width="1.4"/><circle cx="8" cy="8" r="1.5" fill="#111" stroke="none" stroke-width="1"/><path d="M8 1v3M8 12v3" fill="none" stroke="#111" stroke-width="1.3" /></g><g transform="translate(486.0,49.3) scale(0.84) translate(-8,-8)"><circle cx="8" cy="8" r="4.2" fill="none" stroke="#111" stroke-width="1.4"/><path d="M8 1v3M8 12v3" fill="none" stroke="#111" stroke-width="1.3" /><circle cx="10.5" cy="2.5" r="0.7" fill="#111" stroke="none" stroke-width="1"/><circle cx="10.5" cy="13.5" r="0.7" fill="#111" stroke="none" stroke-width="1"/></g><g transform="translate(512.0,49.3) scale(0.84) translate(-8,-8)"><rect x="1.5" y="2" width="8" height="6" fill="#f2f6fc" stroke="#5a7ac0" stroke-width="1" rx="0" /><rect x="2.0" y="2.5" width="7" height="2.2" fill="#4a78d0" stroke="none" stroke-width="1" rx="0" /><rect x="4" y="5" width="8" height="6" fill="#f2f6fc" stroke="#5a7ac0" stroke-width="1" rx="0" /><rect x="4.5" y="5.5" width="7" height="2.2" fill="#4a78d0" stroke="none" stroke-width="1" rx="0" /><rect x="6.5" y="8" width="8" height="6" fill="#f2f6fc" stroke="#5a7ac0" stroke-width="1" rx="0" /><rect x="7.0" y="8.5" width="7" height="2.2" fill="#4a78d0" stroke="none" stroke-width="1" rx="0" /></g><g transform="translate(530.6,49.3) scale(0.84) translate(-8,-8)"><rect x="1.5" y="2.5" width="6" height="11.5" fill="#eef3fb" stroke="#5a7ac0" stroke-width="1" rx="0" /><rect x="2.0" y="3.0" width="5" height="2.2" fill="#4a78d0" stroke="none" stroke-width="1" rx="0" /><rect x="8.5" y="2.5" width="6" height="11.5" fill="#eef3fb" stroke="#5a7ac0" stroke-width="1" rx="0" /><rect x="9.0" y="3.0" width="5" height="2.2" fill="#4a78d0" stroke="none" stroke-width="1" rx="0" /></g><g transform="translate(550.0,49.3) scale(0.84) translate(-8,-8)"><rect x="2.5" y="2" width="11" height="5.5" fill="#eef3fb" stroke="#5a7ac0" stroke-width="1" rx="0" /><rect x="3.0" y="2.5" width="10" height="2.2" fill="#4a78d0" stroke="none" stroke-width="1" rx="0" /><rect x="2.5" y="8.5" width="11" height="5.5" fill="#eef3fb" stroke="#5a7ac0" stroke-width="1" rx="0" /><rect x="3.0" y="9.0" width="10" height="2.2" fill="#4a78d0" stroke="none" stroke-width="1" rx="0" /></g><g transform="translate(569.0,49.3) scale(0.84) translate(-8,-8)"><rect x="2.5" y="2.5" width="11.5" height="11.5" fill="#eef3fb" stroke="#5a7ac0" stroke-width="1" rx="0" /><rect x="3.0" y="3.0" width="10.5" height="2.2" fill="#4a78d0" stroke="none" stroke-width="1" rx="0" /><rect x="8.5" y="2.5" width="5.5" height="5.5" fill="#fff" stroke="#5a7ac0" stroke-width="1.3" rx="0" /></g><g transform="translate(588.5,49.3) scale(0.84) translate(-8,-8)"><rect x="2" y="2.5" width="12.5" height="11" fill="#f4f7fc" stroke="#5a7ac0" stroke-width="1" rx="0" /><rect x="2.5" y="3.0" width="11.5" height="2.2" fill="#4a78d0" stroke="none" stroke-width="1" rx="0" /></g><g transform="translate(611.6,49.3) scale(0.84) translate(-8,-8)"><rect x="3" y="1.5" width="10" height="13.5" fill="#5a82d8" stroke="#3a5aa8" stroke-width="1" rx="2" /><rect x="4.5" y="3" width="7" height="2.5" fill="#a8c0f0" stroke="none" stroke-width="1" rx="0" /><path d="M4.500 7.500h7M4.500 9.700h7M4.500 11.900h7M6.800 6.500v7.500M9.200 6.500v7.500" fill="none" stroke="#c8d8f8" stroke-width="0.9" /></g><g transform="translate(637.5,49.3) scale(0.84) translate(-8,-8)"><rect x="2" y="3" width="12" height="10.5" fill="#f4f4f4" stroke="#b4b4b4" stroke-width="1" rx="0" /><rect x="2.5" y="3.5" width="11" height="2.2" fill="#d0d0d0" stroke="none" stroke-width="1" rx="0" /><rect x="2.5" y="5.5" width="4" height="7.5" fill="#dcdcdc" stroke="none" stroke-width="1" rx="0" /></g><g transform="translate(656.0,49.3) scale(0.84) translate(-8,-8)"><path d="M2 1.5h7l3 3v9.5h-10z" fill="#eef0fa" stroke="#7a86b0" stroke-width="1"/><path d="M9 1.5v3h3" fill="#e8e8e8" stroke="#7a86b0" stroke-width="0.8"/><path d="M4 5h4M4 7h3" fill="none" stroke="#8a96c0" stroke-width="1" /><path d="M3.500 9.500l2-1.500v3z" fill="#4060c8" /><circle cx="10.5" cy="10.5" r="3.6" fill="#f2c21a" stroke="#c89a10" stroke-width="1.2"/><circle cx="10.5" cy="10.5" r="3.9" fill="none" stroke="#e0ac10" stroke-width="1.4" stroke-dasharray="1.6 1.4"/><circle cx="10.5" cy="10.5" r="1.2" fill="#fbe27a" stroke="none" stroke-width="1"/></g><g transform="translate(675.6,49.3) scale(0.84) translate(-8,-8)"><circle cx="7" cy="7" r="5.8" fill="#3a86d8" stroke="#2a60a8" stroke-width="0.8"/><path d="M4 3c2-1 4 0 4 2s-2 2-2 4-2 1-3-1 0-4 1-5z" fill="#58b848" /><path d="M9 8c1-1 3 0 3 1s-1 3-2 3-1-3-1-4z" fill="#58b848" /><rect x="8.5" y="9" width="6" height="5.5" fill="#e8c020" stroke="#a88810" stroke-width="0.8" rx="1" /><path d="M10 9v-1.200a1.500 1.500 0 0 1 3 0v1.200" fill="none" stroke="#a88810" stroke-width="1" /></g><g transform="translate(701.0,49.3) scale(0.84) translate(-8,-8)"><path d="M1.500 3.500h7" fill="none" stroke="#3a70d8" stroke-width="2" /><path d="M8 1l4 2.500-4 2.500z" fill="#3a70d8" /><circle cx="5.5" cy="11" r="3" fill="#d8d8d8" stroke="#555" stroke-width="1.2"/><rect x="9.5" y="6.5" width="4.5" height="8" fill="#f0c020" stroke="#8a7010" stroke-width="1" rx="1" /><rect x="11" y="8" width="1.5" height="3.5" fill="#333" stroke="none" stroke-width="1" rx="0" /><rect x="11" y="12.2" width="1.5" height="1.3" fill="#333" stroke="none" stroke-width="1" rx="0" /></g><g transform="translate(720.6,49.3) scale(0.84) translate(-8,-8)"><rect x="1.5" y="3" width="13" height="10.5" fill="#f4f4f4" stroke="#b4b4b4" stroke-width="1" rx="0" /><rect x="2.0" y="3.5" width="12" height="2.2" fill="#d0d0d0" stroke="none" stroke-width="1" rx="0" /><rect x="7.5" y="6" width="5" height="4" fill="#fafafa" stroke="#c0c0c0" stroke-width="0.8" rx="0" /></g><g transform="translate(743.8,49.3) scale(0.84) translate(-8,-8)"><path d="M1.5 1.5h8.0l2.5 2.5v10.0h-10.5z" fill="#f2f4fa" stroke="#7a86a8" stroke-width="1"/><path d="M9.5 1.5v2.5h2.5" fill="#e8e8e8" stroke="#7a86a8" stroke-width="0.8"/><path d="M3.500 5l1 1 1.500-2M3.500 8.500l1 1 1.500-2" fill="none" stroke="#3a58b8" stroke-width="1" /><path d="M7 5h3.500M7 8.500h2" fill="none" stroke="#8a96c0" stroke-width="1" /><circle cx="10.5" cy="11" r="3.6" fill="#f2c21a" stroke="#c89a10" stroke-width="1.2"/><circle cx="10.5" cy="11" r="3.9" fill="none" stroke="#e0ac10" stroke-width="1.4" stroke-dasharray="1.6 1.4"/><circle cx="10.5" cy="11" r="1.2" fill="#fbe27a" stroke="none" stroke-width="1"/></g><g transform="translate(762.5,49.3) scale(0.84) translate(-8,-8)"><path d="M2 5.500c0-3 4-3 6-2" fill="none" stroke="#3a70d8" stroke-width="2" /><path d="M7 1l4.500 3-4.500 3z" fill="#3a70d8" /><rect x="8.5" y="6" width="6" height="1.8" fill="#333" stroke="none" stroke-width="1" rx="0" /><rect x="8.5" y="8.6" width="6" height="1.8" fill="#333" stroke="none" stroke-width="1" rx="0" /><rect x="8.5" y="11.2" width="6" height="1.8" fill="#333" stroke="none" stroke-width="1" rx="0" /><rect x="8.5" y="13.6" width="6" height="1" fill="#333" stroke="none" stroke-width="1" rx="0" /></g><g transform="translate(782.5,49.3) scale(0.84) translate(-8,-8)"><path d="M3 13l9-9" fill="none" stroke="#8a8a8a" stroke-width="2.2" /><path d="M4 3l9 10" fill="none" stroke="#d8a818" stroke-width="2.2" /><path d="M2 2.500l3 3M11.500 2.500l2.500 2.500" fill="none" stroke="#555" stroke-width="2.2" /><circle cx="12.7" cy="3.3" r="1.6" fill="none" stroke="#666" stroke-width="1.2"/></g><g transform="translate(803.0,49.3) scale(0.84) translate(-8,-8)"><path d="M3 2v12M1.500 3.500h13M1.500 12.500h13" fill="none" stroke="#555" stroke-width="1" /><path d="M3.500 9c2-6 3.500-6 5-1s3 3 5-3" fill="none" stroke="#2a50c8" stroke-width="1.4" /></g><g transform="translate(825.6,49.3) scale(0.84) translate(-8,-8)"><path d="M3 1.500v13M1.500 3h12M1.500 12.500h12" fill="none" stroke="#555" stroke-width="1" /><path d="M3.500 10c2-6 3.500-6 5-2" fill="none" stroke="#2a50c8" stroke-width="1.3" /><path d="M7 13l6.500-7" fill="none" stroke="#e8a838" stroke-width="2.6" /><path d="M12.800 6.800l1.200-1.300" fill="none" stroke="#d04848" stroke-width="2.6" /><path d="M6 14l1.800-.500-1.300-1.300z" fill="#333" /></g><g transform="translate(24.4,103.2) scale(0.84) translate(-8,-8)"><path d="M4 1.500l8 7.500-3.300.300 2 4.200-1.800.800-1.900-4.300-3 2.300z" fill="#f2f5fb" stroke="#5a6478" stroke-width="1"/></g><g transform="translate(42.5,103.2) scale(0.84) translate(-8,-8)"><path d="M0.500 8.500c1.500-3.200 3.200-3.200 5 0s3.500 3.200 5 0 3.500-3.200 5 0" fill="none" stroke="#111" stroke-width="1.25" /></g><g transform="translate(61.9,103.2) scale(0.84) translate(-8,-8)"><path d="M2 2h12v4h-1.200c-.300-1.800-1-2.300-3-2.300v8.600c0 .800.400 1.100 1.700 1.100v1.200h-7v-1.200c1.300 0 1.700-.300 1.700-1.100v-8.600c-2 0-2.700.500-3 2.300h-1.200z" fill="#111" /></g><g transform="translate(80.6,103.2) scale(0.84) translate(-8,-8)"><circle cx="2.5" cy="6" r="1.3" fill="#111" stroke="none" stroke-width="1"/><path d="M2.500 6h3v7.500h9" fill="none" stroke="#6a8ad0" stroke-width="1.2" /><path d="M6 10.5L13.5 2.5" fill="none" stroke="#e8b060" stroke-width="2.8" stroke-linecap="round"/><path d="M12.0 4.0L13.5 2.5" fill="none" stroke="#d85858" stroke-width="2.8" stroke-linecap="round"/></g><g transform="translate(100.0,103.2) scale(0.84) translate(-8,-8)"><circle cx="2" cy="5" r="1.3" fill="#111" stroke="none" stroke-width="1"/><path d="M2 5l9 9" fill="none" stroke="#111" stroke-width="1.2" /><path d="M7 10l3 4" fill="none" stroke="#6a8ad0" stroke-width="1.2" /><path d="M6.5 10L13.5 2.5" fill="none" stroke="#e8b060" stroke-width="2.8" stroke-linecap="round"/><path d="M12.0 4.0L13.5 2.5" fill="none" stroke="#d85858" stroke-width="2.8" stroke-linecap="round"/></g><g transform="translate(118.5,103.5) scale(1.05) translate(-8,-8)"><rect x="2.5" y="1.5" width="11" height="11" fill="#e8b820" stroke="#a88010" stroke-width="1" rx="2" /><rect x="4" y="3.5" width="8" height="4.5" fill="#a8d0f0" stroke="#6a8ab0" stroke-width="0.8" rx="0" /><rect x="2.5" y="9.5" width="11" height="2.5" fill="#c89810" stroke="none" stroke-width="1" rx="0" /><rect x="3.5" y="13" width="2.5" height="2" fill="#8a6a10" stroke="none" stroke-width="1" rx="0" /><rect x="10" y="13" width="2.5" height="2" fill="#8a6a10" stroke="none" stroke-width="1" rx="0" /><path d="M8 3.500v4.500" fill="none" stroke="#6a8ab0" stroke-width="0.8" /></g><g transform="translate(138.0,103.2) scale(0.84) translate(-8,-8)"><rect x="1.5" y="2" width="8" height="8" fill="#f4f8fe" stroke="#7a9ad0" stroke-width="1" rx="1" /><rect x="4.5" y="4.5" width="8" height="8" fill="#dce8f8" stroke="#7a9ad0" stroke-width="1" rx="1" /><rect x="7" y="7.5" width="7.5" height="7" fill="#f4f8fe" stroke="#7a9ad0" stroke-width="1" rx="1" /></g><g transform="translate(154.4,103.2) scale(0.84) translate(-8,-8)"><path d="M4.5 6.5h7l-3.500 4z" fill="#000" /></g><g transform="translate(170.0,103.2) scale(0.84) translate(-8,-8)"><path d="M1.500 13.500l7-6" fill="none" stroke="#3a60c0" stroke-width="1.6" /><path d="M7 8.500c2-4 5-6 8-6.500-1 3-3 6-6.500 8z" fill="#4a78d8" /><path d="M8 12c2 .500 4-.500 5-2" fill="none" stroke="#3a60c0" stroke-width="1.2" /></g><g transform="translate(189.0,103.2) scale(0.84) translate(-8,-8)"><circle cx="8" cy="8" r="6.8" fill="#3a78d8" stroke="#2a58b0" stroke-width="0.8"/><rect x="7" y="6.5" width="2.2" height="5.5" fill="#fff" stroke="none" stroke-width="1" rx="0" /><circle cx="8.1" cy="4.2" r="1.3" fill="#fff" stroke="none" stroke-width="1"/><rect x="6" y="11.3" width="4.2" height="1" fill="#fff" stroke="none" stroke-width="1" rx="0" /></g><g transform="translate(208.0,103.2) scale(0.84) translate(-8,-8)"><rect x="1.5" y="2" width="13" height="12" fill="#dce8f8" stroke="#4a70c0" stroke-width="1.2" rx="0" /><rect x="1.5" y="2" width="13" height="2.5" fill="#3a68d0" stroke="none" stroke-width="1" rx="0" /><circle cx="8" cy="9" r="3.3" fill="#3a68d0" stroke="none" stroke-width="1"/><path d="M7 8c0-1.500 2.500-1.500 2.500 0 0 1-1.200 1-1.200 2M8.300 11.200v.600" fill="none" stroke="#fff" stroke-width="1" /></g><g transform="translate(227.5,103.2) scale(0.84) translate(-8,-8)"><rect x="1.5" y="1.5" width="7" height="6" fill="#e8eef8" stroke="#8a9ab8" stroke-width="0.9" rx="0" /><circle cx="8.5" cy="7.5" r="4.2" fill="#48b060" stroke="#2a8040" stroke-width="0.8"/><path d="M6 6c1.500-1.500 3.500-1 4 .500s-2 1.500-2 3-2.500-1-2-3.500z" fill="#3a88d8" /><circle cx="6" cy="12.5" r="2" fill="none" stroke="#5878a8" stroke-width="1.1"/><circle cx="11.5" cy="12.5" r="2" fill="none" stroke="#5878a8" stroke-width="1.1"/><path d="M8 12.500h1.500" fill="none" stroke="#5878a8" stroke-width="1.1" /></g><g transform="translate(247.0,103.2) scale(0.84) translate(-8,-8)"><rect x="1.5" y="2" width="12.5" height="12" fill="#eaf0fa" stroke="#5a7ab0" stroke-width="1" rx="0" /><path d="M3.500 5h4M3.500 8h3" fill="none" stroke="#5a7ab0" stroke-width="1.1" /><path d="M8 3.500l5-1.500" fill="none" stroke="#48a848" stroke-width="1.6" /><rect x="3.5" y="10" width="3.5" height="2.5" fill="#7a9ad0" stroke="none" stroke-width="1" rx="0" /><circle cx="11" cy="10" r="2.8" fill="#e85838" stroke="none" stroke-width="1"/></g><g transform="translate(265.6,103.2) scale(0.84) translate(-8,-8)"><rect x="2" y="3" width="12" height="10.5" fill="#fff" stroke="#e8902a" stroke-width="1.3" rx="0" /><path d="M2 6.500h12M2 10h12" fill="none" stroke="#e8902a" stroke-width="1.3" /></g><g transform="translate(285.0,103.2) scale(0.84) translate(-8,-8)"><path d="M2 1.5h6.5l3 3v9.5h-9.5z" fill="#eef2fa" stroke="#8a96b8" stroke-width="1"/><path d="M8.5 1.5v3h3" fill="#e8e8e8" stroke="#8a96b8" stroke-width="0.8"/><circle cx="5.5" cy="9.5" r="1.8" fill="#3a68d0" stroke="none" stroke-width="1"/><path d="M7 11.5L13.5 4" fill="none" stroke="#e8b060" stroke-width="2.8" stroke-linecap="round"/><path d="M12.0 5.5L13.5 4" fill="none" stroke="#d85858" stroke-width="2.8" stroke-linecap="round"/><path d="M12 2.500l2.500 2-1 1.200-2.500-2z" fill="#333" /></g><g transform="translate(309.4,103.2) scale(0.84) translate(-8,-8)"><circle cx="4.5" cy="3.8" r="1.9" fill="#dfe4ee" stroke="#3c3c44" stroke-width="1.2"/><circle cx="11.5" cy="3.8" r="1.9" fill="#dfe4ee" stroke="#3c3c44" stroke-width="1.2"/><path d="M6.500 3.300h3" fill="none" stroke="#3c3c44" stroke-width="1.3" /><path d="M13 2.200l1.500-1.200" fill="none" stroke="#3c3c44" stroke-width="1" /><path d="M5 14l2.600-7h1.200l2.600 7h-1.500l-.600-1.800h-2.400l-.600 1.800zM7.300 11h1.700l-.850-2.600z" fill="#2a2a8a" /></g><g transform="translate(328.8,103.2) scale(0.84) translate(-8,-8)"><circle cx="4.5" cy="3.8" r="1.9" fill="#dfe4ee" stroke="#3c3c44" stroke-width="1.2"/><circle cx="11.5" cy="3.8" r="1.9" fill="#dfe4ee" stroke="#3c3c44" stroke-width="1.2"/><path d="M6.500 3.300h3" fill="none" stroke="#3c3c44" stroke-width="1.3" /><path d="M13 2.200l1.500-1.200" fill="none" stroke="#3c3c44" stroke-width="1" /><path d="M1.500 14l2.600-7h1.200l2.600 7h-1.500l-.600-1.800h-2.400l-.600 1.800zM3.800 11h1.700l-.850-2.600z" fill="#2a2a8a" /><path d="M8.500 11.500l1-1.500 1.200 3 1.200-3 1.200 3 1-1.500h1" fill="none" stroke="#6a7ad0" stroke-width="0.9" /></g><g transform="translate(347.0,103.2) scale(0.84) translate(-8,-8)"><circle cx="4.5" cy="3.8" r="1.9" fill="#dfe4ee" stroke="#3c3c44" stroke-width="1.2"/><circle cx="11.5" cy="3.8" r="1.9" fill="#dfe4ee" stroke="#3c3c44" stroke-width="1.2"/><path d="M6.500 3.300h3" fill="none" stroke="#3c3c44" stroke-width="1.3" /><path d="M13 2.200l1.500-1.200" fill="none" stroke="#3c3c44" stroke-width="1" /><rect x="2" y="7.5" width="6" height="6.5" fill="#5a6a80" stroke="#3a4a60" stroke-width="0.8" rx="1" /><path d="M3.500 12.500v-3.500l1.500 2 1.500-2v3.500" fill="none" stroke="#fff" stroke-width="0.9" /><path d="M15 10.500h-4" fill="none" stroke="#e01818" stroke-width="1.4" /><path d="M8.500 10.500l3-2.200v4.400z" fill="#e01818" /></g><g transform="translate(366.0,103.2) scale(0.84) translate(-8,-8)"><rect x="1.5" y="2" width="8" height="8" fill="#f0f0f0" stroke="#c0c0c0" stroke-width="1" rx="1" /><rect x="4.5" y="4.5" width="8" height="8" fill="#e4e4e4" stroke="#c0c0c0" stroke-width="1" rx="1" /><rect x="7" y="7.5" width="7.5" height="7" fill="#f0f0f0" stroke="#c0c0c0" stroke-width="1" rx="1" /></g><g transform="translate(382.0,103.2) scale(0.84) translate(-8,-8)"><path d="M4.5 6.5h7l-3.500 4z" fill="#b0b0b0" /></g><g transform="translate(397.5,103.2) scale(0.84) translate(-8,-8)"><circle cx="4.5" cy="3.8" r="1.9" fill="#dfe4ee" stroke="#3c3c44" stroke-width="1.2"/><circle cx="11.5" cy="3.8" r="1.9" fill="#dfe4ee" stroke="#3c3c44" stroke-width="1.2"/><path d="M6.500 3.300h3" fill="none" stroke="#3c3c44" stroke-width="1.3" /><path d="M13 2.200l1.500-1.200" fill="none" stroke="#3c3c44" stroke-width="1" /><rect x="2" y="7.5" width="6.5" height="6.5" fill="#fff" stroke="#d02020" stroke-width="1.4" rx="1" /><path d="M3.500 9l1.700 4 1.700-4" fill="none" stroke="#333" stroke-width="1" /><path d="M15 10.500h-4" fill="none" stroke="#e01818" stroke-width="1.4" /><path d="M8.800 10.500l3-2.200v4.400z" fill="#e01818" /></g><g transform="translate(416.0,103.2) scale(0.84) translate(-8,-8)"><path d="M1 4.500h11" fill="none" stroke="#3a60c8" stroke-width="1.4" /><path d="M11 2l4 2.500-4 2.500z" fill="#3a60c8" /><path d="M1 11.500h14" fill="none" stroke="#111" stroke-width="1.6" /><path d="M5.500 9v5l4.500-2.500z" fill="#111" /><path d="M10.500 9v5" fill="none" stroke="#111" stroke-width="1.4" /></g><g transform="translate(435.6,103.2) scale(0.84) translate(-8,-8)"><path d="M9 .500h4.500l-3 4.500h2.500l-6 6 1.500-4.500h-2.500z" fill="#f0d020" stroke="#b89810" stroke-width="0.600"/><path d="M1 11.500h14" fill="none" stroke="#111" stroke-width="1.6" /><path d="M5.500 9v5l4.500-2.500z" fill="#111" /><path d="M10.500 9v5" fill="none" stroke="#111" stroke-width="1.4" /></g><g transform="translate(455.0,103.2) scale(0.84) translate(-8,-8)"><path d="M5 6l3 4 6-9" fill="none" stroke="#b8b8b8" stroke-width="1.8" /><path d="M1 11.500h14" fill="none" stroke="#a8a8a8" stroke-width="1.4" /><path d="M5.500 9v5l4.500-2.500z" fill="#a8a8a8" /><path d="M10.500 9v5" fill="none" stroke="#a8a8a8" stroke-width="1.3" /></g><g transform="translate(474.4,103.2) scale(0.84) translate(-8,-8)"><circle cx="4.5" cy="3.8" r="1.9" fill="#dfe4ee" stroke="#3c3c44" stroke-width="1.2"/><circle cx="11.5" cy="3.8" r="1.9" fill="#dfe4ee" stroke="#3c3c44" stroke-width="1.2"/><path d="M6.500 3.300h3" fill="none" stroke="#3c3c44" stroke-width="1.3" /><path d="M13 2.200l1.500-1.200" fill="none" stroke="#3c3c44" stroke-width="1" /><path d="M3 11h10" fill="none" stroke="#e01818" stroke-width="1.3" /><circle cx="2.8" cy="11" r="1.5" fill="#e01818" stroke="none" stroke-width="1"/><circle cx="13.2" cy="11" r="1.5" fill="#e01818" stroke="none" stroke-width="1"/></g><g transform="translate(493.0,103.2) scale(0.84) translate(-8,-8)"><path d="M8 1.500l6.500 12.500h-13z" fill="#f8f000" stroke="#8a8a10" stroke-width="1.200" stroke-linejoin="round"/></g><g transform="translate(512.5,103.2) scale(0.84) translate(-8,-8)"><path d="M3.500 1.500v13M6.500 1.500v13M9.500 1.500v13M12.500 1.500v13M1.500 3.500h13M1.500 6.500h13M1.500 9.500h13M1.500 12.500h13" fill="none" stroke="#3a68d8" stroke-width="1.1" /></g><g transform="translate(528.8,103.2) scale(0.84) translate(-8,-8)"><path d="M4.5 6.5h7l-3.500 4z" fill="#000" /></g><g transform="translate(543.5,103.2) scale(0.84) translate(-8,-8)"><path d="M2.5 1.5h7.5l3 3v10h-10.5z" fill="#fdf4e4" stroke="#8a8a9a" stroke-width="1"/><path d="M10.0 1.5v3h3" fill="#e8e8e8" stroke="#8a8a9a" stroke-width="0.8"/><path d="M4 6h7.500M4 9h7.500M4 12h7.500M6.500 4.500v9.500M9.200 4.500v9.500" fill="none" stroke="#e8a040" stroke-width="1" /></g><g transform="translate(562.8,103.2) scale(0.84) translate(-8,-8)"><path d="M2.5 1.5h7.5l3 3v10h-10.5z" fill="#fdfdfd" stroke="#b89858" stroke-width="1"/><path d="M10.0 1.5v3h3" fill="#e8e8e8" stroke="#b89858" stroke-width="0.8"/><rect x="3.5" y="13" width="8.5" height="1.5" fill="#e8c088" stroke="none" stroke-width="1" rx="0" /></g><g transform="translate(582.0,103.2) scale(0.84) translate(-8,-8)"><path d="M2.5 1.5h7.5l3 3v10h-10.5z" fill="#fdfdfd" stroke="#9aa0b8" stroke-width="1"/><path d="M10.0 1.5v3h3" fill="#e8e8e8" stroke="#9aa0b8" stroke-width="0.8"/><rect x="7.5" y="9" width="5" height="4.5" fill="#e89838" stroke="#b87018" stroke-width="0.8" rx="0" /><path d="M8 11h4" fill="none" stroke="#fbd8a0" stroke-width="0.9" /></g><g transform="translate(602.0,103.2) scale(0.84) translate(-8,-8)"><path d="M4 13v-9.500h7" fill="none" stroke="#3a68d8" stroke-width="1.6" /><rect x="10.5" y="1.5" width="4" height="3.5" fill="#c8daf6" stroke="#6a8ad0" stroke-width="0.9" rx="0" /><rect x="1.5" y="10.5" width="4" height="4" fill="#c8daf6" stroke="#6a8ad0" stroke-width="0.9" rx="0" /><rect x="10.5" y="10.5" width="4" height="4" fill="#dce8fa" stroke="#9ab0e0" stroke-width="0.9" rx="0" /><path d="M6 12.500h4M12.500 5.500v4.500" fill="none" stroke="#a8bce8" stroke-width="1" /></g><g transform="translate(23.0,125.8) scale(0.84) translate(-8,-8)"><rect x="2" y="6" width="10.5" height="8" fill="#e8eef8" stroke="#6a7a98" stroke-width="1" rx="0" /><rect x="2.5" y="6.5" width="9.5" height="2.2" fill="#6a8ad0" stroke="none" stroke-width="1" rx="0" /><path d="M4 10h6M4 12h5" fill="none" stroke="#8a9ab8" stroke-width="0.9" /><path d="M6 2.500h8.500v5h-5z" fill="#f0c828" stroke="#b89010" stroke-width="0.700"/><path d="M9 3l4 2-4 2z" fill="#fbe478" /></g><g transform="translate(47.0,125.8) scale(0.84) translate(-8,-8)"><rect x="3" y="3" width="10.5" height="10.5" fill="none" stroke="#555" stroke-width="0.8" rx="0" /><rect x="1.8" y="1.8" width="2.4" height="2.4" fill="#222" stroke="none" stroke-width="1" rx="0" /><rect x="1.8" y="7.05" width="2.4" height="2.4" fill="#222" stroke="none" stroke-width="1" rx="0" /><rect x="1.8" y="12.3" width="2.4" height="2.4" fill="#222" stroke="none" stroke-width="1" rx="0" /><rect x="7.05" y="1.8" width="2.4" height="2.4" fill="#222" stroke="none" stroke-width="1" rx="0" /><rect x="7.05" y="12.3" width="2.4" height="2.4" fill="#222" stroke="none" stroke-width="1" rx="0" /><rect x="12.3" y="1.8" width="2.4" height="2.4" fill="#222" stroke="none" stroke-width="1" rx="0" /><rect x="12.3" y="7.05" width="2.4" height="2.4" fill="#222" stroke="none" stroke-width="1" rx="0" /><rect x="12.3" y="12.3" width="2.4" height="2.4" fill="#222" stroke="none" stroke-width="1" rx="0" /></g><g transform="translate(66.5,125.8) scale(0.84) translate(-8,-8)"><rect x="2.5" y="2.5" width="10.5" height="10.5" fill="#fff" stroke="#d8d8d8" stroke-width="1.2" rx="0" /></g><g transform="translate(84.4,125.8) scale(0.84) translate(-8,-8)"><circle cx="8" cy="9" r="4.2" fill="none" stroke="#c0c0c0" stroke-width="1.6"/><path d="M8 4.800v4.200" fill="none" stroke="#c0c0c0" stroke-width="1.4" /><path d="M3 4l3.500-2.500.500 4z" fill="#c0c0c0" /><rect x="3" y="8" width="2" height="2.5" fill="#f0f0f0" stroke="none" stroke-width="1" rx="0" /></g><g transform="translate(104.4,125.8) scale(0.84) translate(-8,-8)"><path d="M7 2.500v10.500h-5.500z" fill="#cfcfcf" /><path d="M9 2.500v10.500h5.500z" fill="#b8b8b8" /></g><g transform="translate(123.0,125.8) scale(0.84) translate(-8,-8)"><path d="M13.500 2v5h-10.500z" fill="#d4d4d4" /><path d="M13.500 14v-5h-10.500z" fill="#bcbcbc" /></g><g transform="translate(146.0,125.8) scale(0.84) translate(-8,-8)"><rect x="2" y="5" width="4.5" height="8.5" fill="#3a68d0" stroke="#1a3a90" stroke-width="0.8" rx="1" /><rect x="9.5" y="5" width="4.5" height="8.5" fill="#3a68d0" stroke="#1a3a90" stroke-width="0.8" rx="1" /><rect x="3" y="1.5" width="3" height="4" fill="#3a68d0" stroke="#1a3a90" stroke-width="0.8" rx="1" /><rect x="10" y="1.5" width="3" height="4" fill="#3a68d0" stroke="#1a3a90" stroke-width="0.8" rx="1" /><rect x="6.5" y="5.5" width="3" height="3" fill="#3a68d0" stroke="#1a3a90" stroke-width="0.8" rx="0" /><rect x="2.8" y="9" width="3" height="3.5" fill="#cfe0fa" stroke="none" stroke-width="1" rx="0" /><rect x="10.3" y="9" width="3" height="3.5" fill="#cfe0fa" stroke="none" stroke-width="1" rx="0" /><path d="M1 14l1.500-1.500 1.500 1.500 1.500-1.500 1.500 1.500 1.500-1.500 1.500 1.500 1.500-1.500 1.500 1.500 1.500-1.500" fill="none" stroke="#2a48b8" stroke-width="1" /><path d="M6 9.500l1.500-4.500h1l1.500 4.500h-1l-.300-1h-1.400l-.300 1z" fill="#fff" /></g><g transform="translate(166.0,125.8) scale(0.84) translate(-8,-8)"><rect x="2" y="5" width="4.5" height="8.5" fill="#3a68d0" stroke="#1a3a90" stroke-width="0.8" rx="1" /><rect x="9.5" y="5" width="4.5" height="8.5" fill="#3a68d0" stroke="#1a3a90" stroke-width="0.8" rx="1" /><rect x="3" y="1.5" width="3" height="4" fill="#3a68d0" stroke="#1a3a90" stroke-width="0.8" rx="1" /><rect x="10" y="1.5" width="3" height="4" fill="#3a68d0" stroke="#1a3a90" stroke-width="0.8" rx="1" /><rect x="6.5" y="5.5" width="3" height="3" fill="#3a68d0" stroke="#1a3a90" stroke-width="0.8" rx="0" /><rect x="2.8" y="9" width="3" height="3.5" fill="#cfe0fa" stroke="none" stroke-width="1" rx="0" /><rect x="10.3" y="9" width="3" height="3.5" fill="#cfe0fa" stroke="none" stroke-width="1" rx="0" /></g><g transform="translate(189.4,125.8) scale(0.84) translate(-8,-8)"><path d="M3.5 1.5h8.0l2.5 2.5v10.0h-10.5z" fill="#e8e8e8" stroke="#bcbcbc" stroke-width="1"/><path d="M11.5 1.5v2.5h2.5" fill="#e8e8e8" stroke="#bcbcbc" stroke-width="0.8"/><path d="M1.500 6h5M1.500 10h5" fill="none" stroke="#b0b0b0" stroke-width="1.3" /><path d="M5 4.500l2 1.500-2 1.500M5 8.500l2 1.500-2 1.500" fill="none" stroke="#b0b0b0" stroke-width="1" /><path d="M9 6h3M9 9h3" fill="none" stroke="#c8c8c8" stroke-width="1" /></g><g transform="translate(213.0,125.8) scale(0.84) translate(-8,-8)"><circle cx="8" cy="8" r="6.3" fill="#c4c4c4" stroke="#b0b0b0" stroke-width="0.8"/><rect x="7" y="3.5" width="2" height="6" fill="#f0f0f0" stroke="none" stroke-width="1" rx="0" /><rect x="7" y="10.5" width="2" height="2" fill="#f0f0f0" stroke="none" stroke-width="1" rx="0" /></g><g transform="translate(232.0,125.8) scale(0.84) translate(-8,-8)"><circle cx="8" cy="8" r="6.3" fill="#7a7a7a" stroke="#606060" stroke-width="0.8"/><path d="M5.200 5.200l5.600 5.600M10.800 5.200l-5.600 5.600" fill="none" stroke="#f4f4f4" stroke-width="2" /></g><g transform="translate(254.4,125.8) scale(0.84) translate(-8,-8)"><rect x="1.5" y="2" width="8" height="8" fill="#d8d8d8" stroke="#b4b4b4" stroke-width="1" rx="1" /><rect x="4.5" y="4.5" width="8" height="8" fill="#c8c8c8" stroke="#b4b4b4" stroke-width="1" rx="1" /><rect x="7" y="7.5" width="7.5" height="7" fill="#d8d8d8" stroke="#b4b4b4" stroke-width="1" rx="1" /></g><g transform="translate(273.8,125.8) scale(0.84) translate(-8,-8)"><rect x="1.5" y="2" width="8" height="8" fill="#d8d8d8" stroke="#b4b4b4" stroke-width="1" rx="1" /><rect x="4.5" y="4.5" width="8" height="8" fill="#c8c8c8" stroke="#b4b4b4" stroke-width="1" rx="1" /><rect x="7" y="7.5" width="7.5" height="7" fill="#d8d8d8" stroke="#b4b4b4" stroke-width="1" rx="1" /></g><g transform="translate(297.0,125.8) scale(0.84) translate(-8,-8)"><path d="M10.0 10.0l3.2 3.2" stroke="#c8a828" stroke-width="2.6" stroke-linecap="round"/><circle cx="6.5" cy="6.5" r="5" fill="#d8e6f8" stroke="#6a86b8" stroke-width="1.3"/><path d="M4 6.500h5" fill="none" stroke="#2a50b8" stroke-width="1.8" /><path d="M6.500 4v5" fill="none" stroke="#2a50b8" stroke-width="1.8" /></g><g transform="translate(315.6,125.8) scale(0.84) translate(-8,-8)"><path d="M10.0 10.0l3.2 3.2" stroke="#c8a828" stroke-width="2.6" stroke-linecap="round"/><circle cx="6.5" cy="6.5" r="5" fill="#d8e6f8" stroke="#6a86b8" stroke-width="1.3"/><path d="M4 6.500h5" fill="none" stroke="#2a50b8" stroke-width="1.8" /></g><g transform="translate(336.0,125.8) scale(0.84) translate(-8,-8)"><path d="M8.16 11.16l3.2 3.2" stroke="#c8a828" stroke-width="2.6" stroke-linecap="round"/><circle cx="5.5" cy="8.5" r="3.8" fill="#f0f4fa" stroke="#8a9ab8" stroke-width="1.3"/><rect x="6.5" y="1.5" width="8.5" height="5.5" fill="#e8eef8" stroke="#6a7a98" stroke-width="1" rx="0" /><path d="M8 4.300h5.500M8.800 3v2.600M10.500 3v2.600M12.200 3v2.600" fill="none" stroke="#6a7a98" stroke-width="0.8" /></g><g transform="translate(359.4,125.8) scale(0.84) translate(-8,-8)"><path d="M2 5h5l1-2h5l1 2v8.500h-12z" fill="#d0d0d0" stroke="#b8b8b8" stroke-width="0.800"/><rect x="7" y="6.5" width="5" height="4" fill="#f4f4f4" stroke="#bcbcbc" stroke-width="0.8" rx="0" /><path d="M3.500 8h2" fill="none" stroke="#f0f0f0" stroke-width="1.2" /></g><g transform="translate(382.0,125.8) scale(0.84) translate(-8,-8)"><rect x="1.8" y="2.5" width="3.3" height="4.8" fill="#f8b018" stroke="none" stroke-width="1" rx="0" /><rect x="6.1" y="2.5" width="3.3" height="4.8" fill="#48b828" stroke="none" stroke-width="1" rx="0" /><rect x="10.4" y="2.5" width="3.3" height="4.8" fill="#2848d8" stroke="none" stroke-width="1" rx="0" /><rect x="1.8" y="8.3" width="3.3" height="4.8" fill="#e82828" stroke="none" stroke-width="1" rx="0" /><rect x="6.1" y="8.3" width="3.3" height="4.8" fill="#a828c8" stroke="none" stroke-width="1" rx="0" /><rect x="10.4" y="8.3" width="3.3" height="4.8" fill="#28c8d8" stroke="none" stroke-width="1" rx="0" /></g><g transform="translate(398.8,125.8) scale(0.84) translate(-8,-8)"><path d="M4.5 6.5h7l-3.500 4z" fill="#000" /></g><g transform="translate(414.4,125.8) scale(0.84) translate(-8,-8)"><text x="8" y="14" font-family="Liberation Serif" font-weight="bold" font-size="15.500" text-anchor="middle" fill="#2a50a8">A</text></g><g transform="translate(685.0,103.2) scale(0.84) translate(-8,-8)"><path d="M4 1.500l8 7.500-3.300.300 2 4.200-1.800.800-1.900-4.300-3 2.300z" fill="#f2f5fb" stroke="#5a6478" stroke-width="1"/></g><g transform="translate(704.0,103.2) scale(0.84) translate(-8,-8)"><rect x="1.5" y="2" width="8" height="8" fill="#f4f8fe" stroke="#7a9ad0" stroke-width="1" rx="1" /><rect x="4.5" y="4.5" width="8" height="8" fill="#dce8f8" stroke="#7a9ad0" stroke-width="1" rx="1" /><rect x="7" y="7.5" width="7.5" height="7" fill="#f4f8fe" stroke="#7a9ad0" stroke-width="1" rx="1" /></g><g transform="translate(720.5,103.2) scale(0.84) translate(-8,-8)"><path d="M4.5 6.5h7l-3.500 4z" fill="#000" /></g><g transform="translate(736.4,103.2) scale(0.93) translate(-8,-8)"><rect x="1.5" y="2" width="13" height="12.5" fill="#f4f7fc" stroke="#3a4a80" stroke-width="1.3" rx="0" /><circle cx="7.5" cy="8.5" r="3.6" fill="#fff" stroke="#3a4a80" stroke-width="1.3"/><path d="M10 11l3 3" fill="none" stroke="#c8a020" stroke-width="2.2" /><path d="M2 5.500l3.500 1M10.500 5l3-2.500" fill="none" stroke="#5a6a98" stroke-width="1" /></g><g transform="translate(755.0,103.2) scale(0.93) translate(-8,-8)"><rect x="1.5" y="1.5" width="13" height="13" fill="#dce6f6" stroke="#3a4a80" stroke-width="1.2" rx="0" /><path d="M1.500 5h13M1.500 11h13M5 1.500v13M11 1.500v13" fill="none" stroke="#3a4a80" stroke-width="0.9" /><path d="M5.500 10l2-5 2 3 1.500-2" fill="none" stroke="#fff" stroke-width="1.3" /></g><g transform="translate(774.0,103.2) scale(0.93) translate(-8,-8)"><rect x="1.5" y="2.5" width="13" height="12" fill="#e4ecf8" stroke="#5a6a98" stroke-width="1.2" rx="0" /><path d="M3 12c3-1 6-3 9-8" fill="none" stroke="#e8a858" stroke-width="1.8" /><path d="M3 3h10" fill="none" stroke="#2a60d0" stroke-width="1.4" /><path d="M5.500 1l-3.500 2 3.500 2zM10.500 1l3.500 2-3.500 2z" fill="#2a60d0" /></g><g transform="translate(793.0,103.2) scale(0.93) translate(-8,-8)"><rect x="1.5" y="1.5" width="13" height="13" fill="#e4ecf8" stroke="#5a6a98" stroke-width="1.2" rx="0" /><path d="M5 13c3-2 5-5 8-10" fill="none" stroke="#e8a858" stroke-width="1.8" /><path d="M4 3v10" fill="none" stroke="#2a60d0" stroke-width="1.4" /><path d="M2 5.500l2-3.500 2 3.500zM2 10.500l2 3.500 2-3.500z" fill="#2a60d0" /></g><g transform="translate(812.6,103.2) scale(0.93) translate(-8,-8)"><rect x="1.5" y="1.5" width="13" height="13" fill="#e4ecf8" stroke="#5a6a98" stroke-width="1.2" rx="0" /><path d="M3 13c3-2 6-5 10-10" fill="none" stroke="#e8a858" stroke-width="1.8" /><path d="M4 4l4 4" fill="none" stroke="#2a60d0" stroke-width="1.5" /><path d="M9.500 9.500l-4-.800 3.200-3.200z" fill="#2a60d0" /></g><g transform="translate(831.8,103.2) scale(0.93) translate(-8,-8)"><rect x="1.5" y="1.5" width="13" height="13" fill="#dfe8f6" stroke="#5a6a98" stroke-width="1.2" rx="0" /><path d="M3 13c4-2 7-5 10-10" fill="none" stroke="#e8a858" stroke-width="1.6" /><text x="3" y="11.500" font-family="Liberation Serif" font-style="italic" font-weight="bold" font-size="10" fill="#111">fx</text></g><g transform="translate(850.8,103.2) scale(0.84) translate(-8,-8)"><path d="M2 2h12v4h-1.200c-.300-1.800-1-2.300-3-2.300v8.600c0 .800.400 1.100 1.700 1.100v1.200h-7v-1.200c1.300 0 1.700-.300 1.700-1.100v-8.600c-2 0-2.700.500-3 2.300h-1.200z" fill="#111" /></g><g transform="translate(874.0,103.2) scale(0.84) translate(-8,-8)"><rect x="2" y="6" width="10.5" height="8" fill="#e8eef8" stroke="#6a7a98" stroke-width="1" rx="0" /><rect x="2.5" y="6.5" width="9.5" height="2.2" fill="#6a8ad0" stroke="none" stroke-width="1" rx="0" /><path d="M4 10h6M4 12h5" fill="none" stroke="#8a9ab8" stroke-width="0.9" /><path d="M6 2.500h8.500v5h-5z" fill="#f0c828" stroke="#b89010" stroke-width="0.700"/><path d="M9 3l4 2-4 2z" fill="#fbe478" /></g><g transform="translate(897.5,103.2) scale(0.68) translate(-8,-8)"><path d="M5 2.500l7.500 5.500-7.500 5.500z" fill="#2a9a2a" stroke="#1a7a1a" stroke-width="0.800"/></g><g transform="translate(917.0,103.2) scale(0.84) translate(-8,-8)"><rect x="4.5" y="4.5" width="7" height="7" fill="#d4d4d4" stroke="#c0c0c0" stroke-width="0.8" rx="0" /></g><g transform="translate(936.0,103.2) scale(0.84) translate(-8,-8)"><rect x="4.5" y="4" width="2.3" height="8.5" fill="#c8c8c8" stroke="none" stroke-width="1" rx="0" /><rect x="9" y="4" width="2.3" height="8.5" fill="#c8c8c8" stroke="none" stroke-width="1" rx="0" /></g><g transform="translate(959.0,103.2) scale(0.84) translate(-8,-8)"><rect x="1.5" y="1.5" width="13" height="13" fill="#fdfdfd" stroke="#e8a8a8" stroke-width="1.2" rx="0" /><path d="M2.500 13.500l11-11" fill="none" stroke="#e02828" stroke-width="1.6" /><circle cx="5" cy="11" r="1.3" fill="#e02828" stroke="none" stroke-width="1"/><circle cx="8" cy="8" r="1.3" fill="#e02828" stroke="none" stroke-width="1"/><circle cx="11" cy="5" r="1.3" fill="#e02828" stroke="none" stroke-width="1"/><path d="M8.500 8.500h5.500v5.500h-5.500z" fill="#f4d8d8" /></g><g transform="translate(978.0,103.2) scale(0.84) translate(-8,-8)"><rect x="1.5" y="1.5" width="13" height="13" fill="#fdfdfd" stroke="#e8a8a8" stroke-width="1.2" rx="0" /><path d="M2.500 13.500l11-11" fill="none" stroke="#e02828" stroke-width="1.6" /><circle cx="5" cy="11" r="1.3" fill="#e02828" stroke="none" stroke-width="1"/><circle cx="8" cy="8" r="1.3" fill="#e02828" stroke="none" stroke-width="1"/><circle cx="11" cy="5" r="1.3" fill="#e02828" stroke="none" stroke-width="1"/><path d="M8.500 8.500h5.500v5.500h-5.500z" fill="#fff" /></g><g transform="translate(1001.0,103.2) scale(0.84) translate(-8,-8)"><rect x="1.5" y="2" width="13" height="12" fill="#e8902a" stroke="#8a9ac0" stroke-width="1.2" rx="0" /><rect x="4" y="4.5" width="8" height="7" fill="#fff" stroke="#f4c080" stroke-width="0.8" rx="0" /></g><g transform="translate(1020.6,103.2) scale(0.84) translate(-8,-8)"><rect x="1.5" y="2" width="13" height="12" fill="#f8f8fc" stroke="#8a9ac0" stroke-width="1.2" rx="0" /><rect x="4" y="4.2" width="2.2" height="2.2" fill="#e8902a" stroke="none" stroke-width="1" rx="0" /><rect x="4" y="9.5" width="2.2" height="2.2" fill="#e8902a" stroke="none" stroke-width="1" rx="0" /><rect x="9.5" y="4.2" width="2.2" height="2.2" fill="#e8902a" stroke="none" stroke-width="1" rx="0" /><rect x="9.5" y="9.5" width="2.2" height="2.2" fill="#e8902a" stroke="none" stroke-width="1" rx="0" /></g><g transform="translate(1044.8,103.2) scale(0.84) translate(-8,-8)"><rect x="1.5" y="2" width="13" height="12" fill="#f4f6fc" stroke="#7a8ab8" stroke-width="1.3" rx="0" /><rect x="5" y="4.5" width="8" height="7.5" fill="#f8c888" stroke="none" stroke-width="1" rx="0" /><path d="M6.500 4.500v7.500M9 4.500v7.500M11.500 4.500v7.500" fill="none" stroke="#e8902a" stroke-width="1.3" /></g><g transform="translate(1063.8,103.2) scale(0.84) translate(-8,-8)"><rect x="1.5" y="2" width="13" height="12" fill="#f4f6fc" stroke="#7a8ab8" stroke-width="1.3" rx="0" /><rect x="4" y="4.5" width="9.5" height="7.5" fill="#f8c888" stroke="none" stroke-width="1" rx="0" /><path d="M4 6h9.500M4 8.500h9.500M4 11h9.500" fill="none" stroke="#e8902a" stroke-width="1.3" /></g><g transform="translate(1082.5,103.2) scale(0.84) translate(-8,-8)"><rect x="1.5" y="2" width="13" height="12" fill="#f4f6fc" stroke="#7a8ab8" stroke-width="1.3" rx="0" /><path d="M5 4v9M7.500 4v9M10 4v9M12.500 4v9" fill="none" stroke="#e8902a" stroke-width="1.3" /></g><g transform="translate(1101.0,103.2) scale(0.84) translate(-8,-8)"><rect x="1.5" y="2" width="13" height="12" fill="#f4f6fc" stroke="#7a8ab8" stroke-width="1.3" rx="0" /><path d="M6 4v9M10 4v9" fill="none" stroke="#e8902a" stroke-width="1.8" /></g><g transform="translate(1124.4,103.2) scale(0.84) translate(-8,-8)"><rect x="1.5" y="2" width="13" height="12" fill="#f8f8fc" stroke="#6a7aa8" stroke-width="1.3" rx="0" /><path d="M1.500 9.500h13" fill="none" stroke="#333" stroke-width="1.4" /></g><g transform="translate(1143.5,103.2) scale(0.84) translate(-8,-8)"><rect x="1.5" y="2" width="13" height="12" fill="#f8f8fc" stroke="#6a7aa8" stroke-width="1.3" rx="0" /><path d="M1.500 8h13M8 2v12" fill="none" stroke="#6a7aa8" stroke-width="1.2" /></g><g transform="translate(1167.0,103.2) scale(0.84) translate(-8,-8)"><path d="M11.500 11.500l3 3" fill="none" stroke="#c8a020" stroke-width="2.4" /><circle cx="7.5" cy="7.5" r="6" fill="#cfdcf4" stroke="#5a72b0" stroke-width="1.4"/><path d="M5 5l5 5M10 5l-5 5" fill="none" stroke="#111" stroke-width="1.8" /></g><g transform="translate(1186.0,103.2) scale(0.84) translate(-8,-8)"><path d="M11.500 11.500l3 3" fill="none" stroke="#c8a020" stroke-width="2.4" /><circle cx="7.5" cy="7.5" r="6" fill="#cfdcf4" stroke="#5a72b0" stroke-width="1.4"/><path d="M5 4.500l2.500 4 2.500-4M7.500 8.500v3" fill="none" stroke="#111" stroke-width="1.7" /></g><g transform="translate(1205.0,103.2) scale(0.84) translate(-8,-8)"><path d="M11.500 11.500l3 3" fill="none" stroke="#c8a020" stroke-width="2.4" /><circle cx="7.5" cy="7.5" r="6" fill="#cfdcf4" stroke="#5a72b0" stroke-width="1.4"/><text x="3.500" y="11" font-family="Liberation Sans" font-weight="bold" font-style="italic" font-size="8.500" fill="#111">A</text><path d="M9 10c1-2 2-2 3-3" fill="none" stroke="#111" stroke-width="1.2" /></g><g transform="translate(1224.0,103.2) scale(0.84) translate(-8,-8)"><path d="M11.500 11.500l3 3" fill="none" stroke="#c8a020" stroke-width="2.4" /><circle cx="7.5" cy="7.5" r="6" fill="#cfdcf4" stroke="#5a72b0" stroke-width="1.4"/><rect x="3.5" y="5.5" width="8" height="4" fill="#e02040" stroke="none" stroke-width="1" rx="0" /></g><g transform="translate(1248.0,103.2) scale(0.84) translate(-8,-8)"><rect x="1.5" y="5" width="11.5" height="9.5" fill="#e4ecf8" stroke="#5a6a98" stroke-width="1.1" rx="0" /><path d="M1.500 8h11.500M1.500 11h11.500M6 5v9.500" fill="none" stroke="#5a6a98" stroke-width="0.9" /><rect x="1.5" y="5" width="11.5" height="2.5" fill="#5a82d0" stroke="none" stroke-width="1" rx="0" /><path d="M8 9l5.500-6" fill="none" stroke="#f0f0f0" stroke-width="3" /><path d="M8 9l5.500-6" fill="none" stroke="#8a9ac0" stroke-width="1" /></g><g transform="translate(685.8,125.8) scale(0.95) translate(-8,-8)"><path d="M2 2v12M14 2v12M1.500 4h13M1.500 12h13" fill="none" stroke="#777" stroke-width="1" /><path d="M8 2v12" fill="none" stroke="#555" stroke-width="1" /><path d="M2 8h12" fill="none" stroke="#111" stroke-width="1.6" /><circle cx="3" cy="8" r="1.5" fill="#1a9a1a" stroke="none" stroke-width="1"/><circle cx="8" cy="8" r="1.5" fill="#1a9a1a" stroke="none" stroke-width="1"/><circle cx="13" cy="8" r="1.5" fill="#1a9a1a" stroke="none" stroke-width="1"/></g><g transform="translate(704.0,125.8) scale(0.95) translate(-8,-8)"><path d="M2 2v12M14 2v12M1.500 4h13M1.500 12h13" fill="none" stroke="#777" stroke-width="1" /><path d="M8 2v12" fill="none" stroke="#555" stroke-width="1" /><path d="M2 7.500h12" fill="none" stroke="#111" stroke-width="1.3" /><path d="M2 6h4v3h-4zM10 6h4v3h-4z" fill="#1a9a1a" /></g><g transform="translate(723.0,125.8) scale(0.95) translate(-8,-8)"><path d="M1.500 2.500h13M1.500 13.500h13M2 2.500v11" fill="none" stroke="#555" stroke-width="1" /><path d="M2 13c3-2 3-9 6-9s3 7 6 9" fill="none" stroke="#1a9a1a" stroke-width="1.5" /><path d="M8 4v9.500" fill="none" stroke="#555" stroke-width="0.9" stroke-dasharray="1.500 1"/></g><g transform="translate(742.0,125.8) scale(0.95) translate(-8,-8)"><path d="M1.500 2.500h13M1.500 13.500h13M2 2.500v11" fill="none" stroke="#555" stroke-width="1" /><path d="M2.500 3c2 3 2 9 5.500 9s3.500-6 5.500-9" fill="none" stroke="#1a9a1a" stroke-width="1.5" /><path d="M8 3v9" fill="none" stroke="#c03030" stroke-width="0.9" stroke-dasharray="1.500 1"/></g><g transform="translate(761.0,125.8) scale(0.95) translate(-8,-8)"><path d="M1.500 2.500h13M1.500 13.500h13M2 2.500v11" fill="none" stroke="#555" stroke-width="1" /><path d="M2.500 10l2.500 2.500 4-8 3 8" fill="none" stroke="#1a9a1a" stroke-width="1.4" /><path d="M9 3v10.500M12 5v8" fill="none" stroke="#555" stroke-width="0.9" /></g><g transform="translate(780.8,125.8) scale(0.95) translate(-8,-8)"><path d="M1.500 2.500h13M1.500 13.500h13M2 2.500v11" fill="none" stroke="#555" stroke-width="1" /><path d="M2.500 6l2.500-3 4 8.500 3-7" fill="none" stroke="#1a9a1a" stroke-width="1.4" /><path d="M9 3v10.500" fill="none" stroke="#555" stroke-width="0.9" /><path d="M10.500 9.500l1.500 3 1.500-3z" fill="#555" /></g><g transform="translate(799.5,125.8) scale(0.95) translate(-8,-8)"><path d="M1.500 2.500h13M1.500 13.500h13M2 2.500v11" fill="none" stroke="#555" stroke-width="1" /><path d="M3 13l10-10" fill="none" stroke="#1a9a1a" stroke-width="1.4" /><path d="M6.500 3v10.500M3 9.500h8" fill="none" stroke="#555" stroke-width="0.9" /></g><g transform="translate(819.0,125.8) scale(0.95) translate(-8,-8)"><path d="M1.500 2.500h13M1.500 13.500h13M2.500 2.500v11" fill="none" stroke="#555" stroke-width="1" /><path d="M3 12c3-1 4-6 10-7M3 6c3 0 5 3 10 6" fill="none" stroke="#1a9a1a" stroke-width="1.2" /><path d="M6 3v10.500" fill="none" stroke="#555" stroke-width="0.9" stroke-dasharray="1.500 1"/></g><g transform="translate(838.0,125.8) scale(0.95) translate(-8,-8)"><path d="M1.500 2.500h13M1.500 13.500h13M2.500 2.500v11" fill="none" stroke="#555" stroke-width="1" /><path d="M3 12c3-1 5-7 10-8M4 9c3 0 5 1 9 1" fill="none" stroke="#1a9a1a" stroke-width="1.2" /><path d="M6.500 3v10.500" fill="none" stroke="#555" stroke-width="0.9" stroke-dasharray="1.500 1"/></g><g transform="translate(857.6,125.8) scale(0.95) translate(-8,-8)"><path d="M1.500 2.500h13M1.500 13.500h13" fill="none" stroke="#555" stroke-width="1" /><path d="M2 4l6 3 6-3M2 6.500l6 3 6-3M2 9l6 3 6-3M2 11.500l6 2 6-2" fill="none" stroke="#1a9a1a" stroke-width="1.2" /><circle cx="8" cy="12.5" r="1.4" fill="#111" stroke="none" stroke-width="1"/></g><g transform="translate(877.0,125.8) scale(0.95) translate(-8,-8)"><path d="M1.500 2.500h13M1.500 13.500h13" fill="none" stroke="#555" stroke-width="1" /><path d="M2 6l6-3 6 3M2 8.500l6-3 6 3M2 11l6-3 6 3M2 13l6-2.500 6 2.500" fill="none" stroke="#1a9a1a" stroke-width="1.2" /><circle cx="8" cy="3.5" r="1.4" fill="#111" stroke="none" stroke-width="1"/></g><g transform="translate(900.0,125.8) scale(0.84) translate(-8,-8)"><rect x="1.5" y="2.5" width="9" height="10.5" fill="#e8b820" stroke="#a87c10" stroke-width="1" rx="1" /><rect x="4" y="1.5" width="4.5" height="2.5" fill="#c8b060" stroke="#8a7020" stroke-width="0.8" rx="0" /><rect x="6.5" y="7" width="8" height="7.5" fill="#dfe8f8" stroke="#5868a0" stroke-width="1" rx="0" /><path d="M8 9.500h5M8 11.500h5" fill="none" stroke="#5868a0" stroke-width="0.9" /><rect x="6.5" y="7" width="8" height="1.8" fill="#6a8ad0" stroke="none" stroke-width="1" rx="0" /></g><g transform="translate(916.0,125.8) scale(0.84) translate(-8,-8)"><path d="M4.5 6.5h7l-3.500 4z" fill="#000" /></g><g transform="translate(935.5,125.8) scale(0.84) translate(-8,-8)"><rect x="2" y="2.5" width="12" height="11.5" fill="#dce6f8" stroke="#6a86c8" stroke-width="1.1" rx="0" /><rect x="2" y="2.5" width="12" height="3" fill="#5a82d8" stroke="none" stroke-width="1" rx="0" /><path d="M4 8.500h8M4 11h8" fill="none" stroke="#8aa0d8" stroke-width="1.3" /></g><g transform="translate(959.0,125.8) scale(0.84) translate(-8,-8)"><rect x="1.5" y="3" width="11" height="11.5" fill="#d8b858" stroke="#8a7020" stroke-width="1" rx="1" /><rect x="4" y="1.5" width="6" height="3" fill="#e8d080" stroke="#8a7020" stroke-width="0.8" rx="1" /><rect x="5" y="8" width="9.5" height="6.5" fill="#e4e8f0" stroke="#4a5a78" stroke-width="1" rx="0" /><path d="M7.500 10v3M9.800 10v3M12 10v3" fill="none" stroke="#333" stroke-width="1.1" /></g><g transform="translate(983.8,125.8) scale(0.84) translate(-8,-8)"><path d="M2 3h12M2 13h12" fill="none" stroke="#111" stroke-width="1.8" /><circle cx="2.5" cy="3" r="1.3" fill="#111" stroke="none" stroke-width="1"/><circle cx="2.5" cy="13" r="1.3" fill="#111" stroke="none" stroke-width="1"/><circle cx="13.5" cy="3" r="1.3" fill="#111" stroke="none" stroke-width="1"/><circle cx="13.5" cy="13" r="1.3" fill="#111" stroke="none" stroke-width="1"/><rect x="4" y="5.5" width="8" height="5" fill="#f4f4fa" stroke="#8a8ab0" stroke-width="0.8" rx="0" /><path d="M5 9.500l2-2 1.500 1 2-2" fill="none" stroke="#e04848" stroke-width="1" /></g><g transform="translate(1002.0,125.8) scale(0.84) translate(-8,-8)"><path d="M3 2v12M13 2v12" fill="none" stroke="#111" stroke-width="1.8" /><circle cx="3" cy="2.5" r="1.3" fill="#111" stroke="none" stroke-width="1"/><circle cx="3" cy="13.5" r="1.3" fill="#111" stroke="none" stroke-width="1"/><circle cx="13" cy="2.5" r="1.3" fill="#111" stroke="none" stroke-width="1"/><circle cx="13" cy="13.5" r="1.3" fill="#111" stroke="none" stroke-width="1"/><rect x="5.5" y="4" width="5" height="8" fill="#f4f4fa" stroke="#8a8ab0" stroke-width="0.8" rx="0" /><path d="M6 10l1.500-2 1-1 1.500-2" fill="none" stroke="#e04848" stroke-width="1" /></g><g transform="translate(1023.8,125.8) scale(0.84) translate(-8,-8)"><path d="M10.0 10.0l3.2 3.2" stroke="#c8a828" stroke-width="2.6" stroke-linecap="round"/><circle cx="6.5" cy="6.5" r="5" fill="#d8e6f8" stroke="#6a86b8" stroke-width="1.3"/><path d="M4 6.500h5" fill="none" stroke="#2a50b8" stroke-width="1.8" /><path d="M6.500 4v5" fill="none" stroke="#2a50b8" stroke-width="1.8" /></g><g transform="translate(1043.0,125.8) scale(0.84) translate(-8,-8)"><path d="M10.0 10.0l3.2 3.2" stroke="#c8a828" stroke-width="2.6" stroke-linecap="round"/><circle cx="6.5" cy="6.5" r="5" fill="#d8e6f8" stroke="#6a86b8" stroke-width="1.3"/><path d="M4 6.500h5" fill="none" stroke="#2a50b8" stroke-width="1.8" /></g><g transform="translate(1063.8,125.8) scale(0.84) translate(-8,-8)"><path d="M8.16 11.16l3.2 3.2" stroke="#c8a828" stroke-width="2.6" stroke-linecap="round"/><circle cx="5.5" cy="8.5" r="3.8" fill="#f0f4fa" stroke="#8a9ab8" stroke-width="1.3"/><rect x="6.5" y="1.5" width="8.5" height="5.5" fill="#e8eef8" stroke="#6a7a98" stroke-width="1" rx="0" /><path d="M8 4.300h5.500M8.800 3v2.600M10.500 3v2.600M12.200 3v2.600" fill="none" stroke="#6a7a98" stroke-width="0.8" /></g><g transform="translate(1087.0,125.8) scale(0.84) translate(-8,-8)"><rect x="1.8" y="2.5" width="3.3" height="4.8" fill="#b8b8b8" stroke="none" stroke-width="1" rx="0" /><rect x="6.1" y="2.5" width="3.3" height="4.8" fill="#a8a8a8" stroke="none" stroke-width="1" rx="0" /><rect x="10.4" y="2.5" width="3.3" height="4.8" fill="#b0b0b0" stroke="none" stroke-width="1" rx="0" /><rect x="1.8" y="8.3" width="3.3" height="4.8" fill="#a0a0a0" stroke="none" stroke-width="1" rx="0" /><rect x="6.1" y="8.3" width="3.3" height="4.8" fill="#b4b4b4" stroke="none" stroke-width="1" rx="0" /><rect x="10.4" y="8.3" width="3.3" height="4.8" fill="#d0d0d0" stroke="none" stroke-width="1" rx="0" /></g><g transform="translate(1103.0,125.8) scale(0.84) translate(-8,-8)"><path d="M4.5 6.5h7l-3.500 4z" fill="#b8b8b8" /></g><g transform="translate(1118.8,125.8) scale(0.84) translate(-8,-8)"><text x="8" y="14" font-family="Liberation Serif" font-weight="bold" font-size="15.500" text-anchor="middle" fill="#2a50a8">A</text></g><g transform="translate(1141.0,125.8) scale(0.84) translate(-8,-8)"><rect x="1.5" y="2" width="8" height="8" fill="#d8d8d8" stroke="#b4b4b4" stroke-width="1" rx="1" /><rect x="4.5" y="4.5" width="8" height="8" fill="#c8c8c8" stroke="#b4b4b4" stroke-width="1" rx="1" /><rect x="7" y="7.5" width="7.5" height="7" fill="#d8d8d8" stroke="#b4b4b4" stroke-width="1" rx="1" /></g><g transform="translate(1160.6,125.8) scale(0.84) translate(-8,-8)"><rect x="1.5" y="2" width="8" height="8" fill="#d8d8d8" stroke="#b4b4b4" stroke-width="1" rx="1" /><rect x="4.5" y="4.5" width="8" height="8" fill="#c8c8c8" stroke="#b4b4b4" stroke-width="1" rx="1" /><rect x="7" y="7.5" width="7.5" height="7" fill="#d8d8d8" stroke="#b4b4b4" stroke-width="1" rx="1" /></g></svg>
</body></html>
